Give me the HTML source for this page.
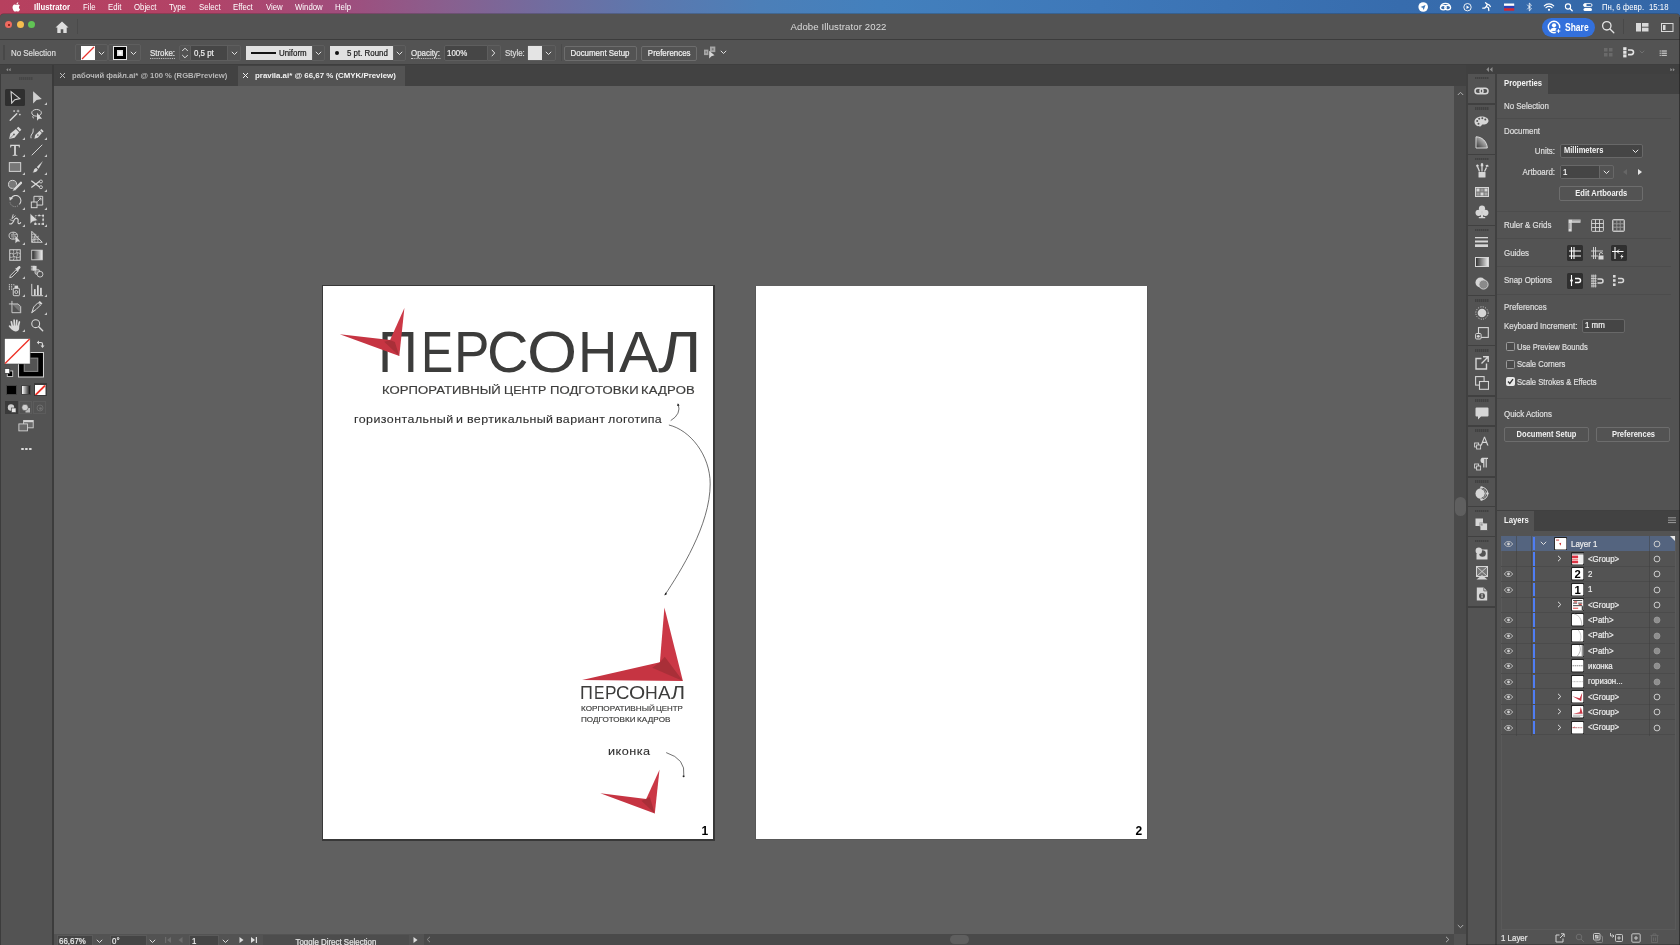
<!DOCTYPE html>
<html lang="ru"><head><meta charset="utf-8"><title>Adobe Illustrator 2022</title>
<style>
*{box-sizing:border-box;margin:0;padding:0}
html,body{width:1680px;height:945px;overflow:hidden;background:#535353}
body{will-change:transform;font-family:"Liberation Sans",sans-serif;font-size:9px;color:#e2e2e2;position:relative}
.abs,.abs *{position:absolute}
#menubar{position:absolute;left:0;top:0;width:1680px;height:20px;background:linear-gradient(90deg,#b7405e 0,#b24367 200px,#a04d7c 340px,#88608f 450px,#706da0 550px,#5c78ae 650px,#4c7fb8 760px,#4380bd 880px,#3e78b9 1100px,#376cad 1400px,#3467a7 1680px)}
#menubar span{position:absolute;top:2px;font-size:8.400px;color:#fff;white-space:nowrap;line-height:10px;transform:scaleX(.93);transform-origin:0 0}
#titlebar{position:absolute;left:0;top:14.300px;width:1680px;height:25.700px;background:#535353;border-bottom:1.300px solid #3c3c3c;border-radius:3.500px 3.500px 0 0;box-shadow:0 -.5px 0 rgba(40,40,40,.55)}
#ctrlbar{position:absolute;left:0;top:40px;width:1680px;height:25px;background:#535353;border-bottom:1.500px solid #3e3e3e}
#tabbar{position:absolute;left:0;top:65px;width:1680px;height:21px;background:#424242}
#toolbar{position:absolute;left:0;top:74px;width:52px;height:871px;background:#535353}
#canvas{position:absolute;left:54px;top:86px;width:1400px;height:848px;background:#606060;overflow:hidden}
#vscroll{position:absolute;left:1454px;top:86px;width:12px;height:848px;background:#4a4a4a}
#statusbar{position:absolute;left:54px;top:934px;width:1412px;height:11px;background:#4a4a4a}
#dock{position:absolute;left:1466px;top:65px;width:214px;height:880px;background:#404040}
.chk{position:absolute;width:9px;height:9px;border:1px solid #9a9a9a;border-radius:1.5px;background:#4a4a4a}
.lbl{position:absolute;white-space:nowrap;line-height:1;font-size:8.600px;color:#dedede;transform:scaleX(.92);transform-origin:0 50%;margin-top:-.4px}
.btn{position:absolute;border:1px solid #6d6d6d;border-radius:2px;text-align:center;font-size:7.500px;font-weight:bold;color:#f2f2f2;white-space:nowrap}
.sep{position:absolute;height:1px;background:#4c4c4c;width:174px}
.t{position:absolute;white-space:nowrap;line-height:1}
#ctrlbar .t,#statusbar .t,.lbl{-webkit-text-stroke:.22px currentColor}
.lbl[style*="bold"]{-webkit-text-stroke:0}
</style></head><body>
<div id="menubar">
<svg class="t" style="left:11px;top:1px" width="10" height="12" viewBox="0 0 10 12"><path fill="#fff" d="M7.9 6.3c0-1.2 1-1.8 1-1.8-.6-.8-1.400-.9-1.700-.9-.7-.1-1.400.4-1.800.4-.4 0-.9-.4-1.500-.4C3.100 3.600 2.300 4.100 1.900 4.800c-.8 1.400-.2 3.500.6 4.600.4.600.9 1.200 1.500 1.200.6 0 .8-.4 1.500-.4s.9.400 1.500.400c.600 0 1-.600 1.400-1.100.4-.600.600-1.200.600-1.300 0 0-1.100-.4-1.100-1.900zM6.800 2.800c.3-.4.500-.9.500-1.500-.5 0-1 .3-1.400.7-.3.400-.6.900-.5 1.400.5.100 1.100-.2 1.400-.6z"/></svg>
<span style="left:33.7px;font-weight:bold">Illustrator</span>
<span style="left:82.7px">File</span>
<span style="left:107.7px">Edit</span>
<span style="left:133.7px">Object</span>
<span style="left:168.7px">Type</span>
<span style="left:198.7px">Select</span>
<span style="left:232.7px">Effect</span>
<span style="left:265.7px">View</span>
<span style="left:294.7px">Window</span>
<span style="left:334.7px">Help</span>
<svg class="t" style="left:1415px;top:0" width="180" height="14" viewBox="0 0 180 14" fill="none" stroke="#fff" stroke-width="1">
<circle cx="8.200" cy="7" r="4.800" fill="#fff" stroke="none"/><path d="M5.500 7.100l5-2.200-1.800 5-1-2.100z" fill="#3f79b9" stroke="none"/>
<g stroke-width="1.300"><ellipse cx="28.300" cy="7.600" rx="2.900" ry="2.300"/><ellipse cx="32.700" cy="7.600" rx="2.900" ry="2.300"/><path d="M25.600 7c.5-2.300 2.600-3.600 4.900-3.600 2.200 0 3.900 1 4.600 2.600"/></g>
<circle cx="52.500" cy="7.200" r="3.700" stroke-width=".9"/><path d="M51.500 5.500l2.800 1.700-2.800 1.700z" fill="#fff" stroke="none"/>
<path d="M70.500 2.800l1.800 1.400-1 2.300 2.200 1.200.3 2.800M71.300 6.500l-1.500 1.500-2 .2M72.300 4.200l2 .8 1 1.500" stroke-width="1.300" stroke-linecap="round" stroke-linejoin="round"/>
<rect x="89" y="3.500" width="10.200" height="2.400" fill="#fff" stroke="none"/><rect x="89" y="5.900" width="10.200" height="2.400" fill="#2a3fb5" stroke="none"/><rect x="89" y="8.300" width="10.200" height="2.400" fill="#d8242f" stroke="none"/>
<path d="M112.200 4.700l4.200 4.200-2.100 2V3.100l2.100 2-4.200 4.200" stroke-width=".8" stroke-linejoin="round"/>
<path d="M129.300 5.800a6.500 6.500 0 0 1 9.400 0M131 7.700a4.100 4.100 0 0 1 6 0" stroke-width="1.200" stroke-linecap="round"/><circle cx="134" cy="9.800" r="1.100" fill="#fff" stroke="none"/>
<circle cx="153" cy="6.500" r="2.600" stroke-width="1.100"/><path d="M155 8.500l2.200 2.300" stroke-width="1.300" stroke-linecap="round"/>
<rect x="168.500" y="3.600" width="8.500" height="3" rx="1.500" stroke-width=".9"/><rect x="168.500" y="8" width="8.500" height="3" rx="1.500" fill="#fff" stroke="none"/><circle cx="170.200" cy="5.100" r="1.500" fill="#fff" stroke="none"/>
</svg>
<span style="left:1601.500px">Пн, 6 февр.</span>
<span style="left:1649px">15:18</span>
</div>
<div id="titlebar">
<div class="t" style="left:5.100px;top:7.100px;width:7px;height:7px;border-radius:50%;background:#ee6a5f"></div><div class="t" style="left:7.500px;top:9.500px;width:2.200px;height:2.200px;border-radius:50%;background:#7a1208"></div>
<div class="t" style="left:17px;top:7.100px;width:7px;height:7px;border-radius:50%;background:#f5bd4f"></div>
<div class="t" style="left:28.400px;top:7.100px;width:7px;height:7px;border-radius:50%;background:#61c455"></div>
<svg class="t" style="left:55px;top:7px" width="14" height="13" viewBox="0 0 14 13"><path fill="#dedede" d="M7 .5L.5 6.500h1.800V12h3.400V8.200h2.600V12h3.400V6.500h1.800z"/></svg>
<div class="t" style="left:77px;top:5px;width:1px;height:15px;background:#4a4a4a"></div>
<div class="t" style="left:-1.500px;top:8px;width:1680px;text-align:center;font-size:9.600px;color:#dcdcdc;letter-spacing:.1px">Adobe Illustrator 2022</div>
<div class="t" style="left:1542px;top:4px;width:53px;height:19px;border-radius:9.500px;background:#3370dc"></div>
<svg class="t" style="left:1547px;top:6px" width="16" height="15" viewBox="0 0 16 15" fill="none" stroke="#fff"><circle cx="7" cy="7" r="5.700" stroke-width="1.400"/><circle cx="7" cy="5.300" r="2.100" fill="#fff" stroke="none"/><path d="M3 11c.5-2.500 2-3.300 4-3.300s3.500.8 4 3.300z" fill="#fff" stroke="none"/><circle cx="11.500" cy="11" r="3" fill="#3370dc" stroke="none"/><path d="M11.500 9.200v3.600M9.700 11h3.600" stroke-width="1"/></svg>
<div class="t" style="left:1565.300px;top:9px;font-size:10px;color:#fff;font-weight:bold;transform:scaleX(.85);transform-origin:0 0">Share</div>
<svg class="t" style="left:1601px;top:6px" width="14" height="14" viewBox="0 0 14 14" fill="none" stroke="#e4e4e4" stroke-width="1.300"><circle cx="5.800" cy="5.800" r="4.200"/><path d="M9 9l3.800 3.800" stroke-linecap="round"/></svg>
<div class="t" style="left:1623px;top:5px;width:1px;height:15px;background:#484848"></div>
<svg class="t" style="left:1636px;top:9px" width="13" height="9" viewBox="0 0 13 9" fill="#d9d9d9"><rect x="0" y="0" width="5" height="8.500"/><rect x="6" y="0" width="6.500" height="3.700"/><rect x="6" y="4.700" width="6.500" height="3.800"/></svg>
<svg class="t" style="left:1661px;top:9px" width="13" height="9" viewBox="0 0 13 9" fill="none" stroke="#d9d9d9"><rect x=".5" y=".5" width="11.500" height="8" /><rect x="2" y="2" width="2.500" height="5" fill="#d9d9d9" stroke="none"/></svg>
</div>
<div id="ctrlbar">
<div class="t" style="left:3px;top:5px;width:2px;height:15px;background:#484848"></div>
<div class="t" style="left:11px;top:9px;font-size:8.600px;transform:scaleX(.92);transform-origin:0 50%;margin-top:-.4px;color:#dcdcdc">No Selection</div>
<div class="t" style="left:75px;top:4px;width:33px;height:17px;border:1px solid #5e5e5e;border-radius:2px"></div>
<svg class="t" style="left:81px;top:6px" width="14" height="14" viewBox="0 0 14 14"><rect width="14" height="14" fill="#fff"/><path d="M1 13L13 1" stroke="#e8322c" stroke-width="1.200"/></svg>
<svg class="t" style="left:98px;top:11px" width="7" height="5" viewBox="0 0 7 5" fill="none" stroke="#e0e0e0" stroke-width="1"><path d="M.8.800l2.700 2.700L6.200.8"/></svg>
<div class="t" style="left:108px;top:4px;width:33px;height:17px;border:1px solid #5e5e5e;border-radius:2px"></div>
<svg class="t" style="left:113px;top:6px" width="14" height="14" viewBox="0 0 14 14"><rect x=".5" y=".5" width="13" height="13" fill="#000" stroke="#e6e6e6"/><rect x="4" y="4" width="6" height="6" fill="#ddd"/><rect x="5.500" y="5.500" width="3" height="3" fill="#fff"/></svg>
<svg class="t" style="left:130px;top:11px" width="7" height="5" viewBox="0 0 7 5" fill="none" stroke="#e0e0e0" stroke-width="1"><path d="M.8.800l2.700 2.700L6.200.8"/></svg>
<div class="t" style="left:150px;top:9px;font-size:8.600px;transform:scaleX(.92);transform-origin:0 50%;margin-top:-.4px;color:#e6e6e6;border-bottom:1px dotted #cfcfcf;padding-bottom:1px">Stroke:</div>
<div class="t" style="left:179px;top:5px;width:12px;height:16px;border:1px solid #5e5e5e;border-radius:2px 0 0 2px"></div>
<svg class="t" style="left:181px;top:7px" width="8" height="12" viewBox="0 0 8 12" fill="none" stroke="#e0e0e0" stroke-width="1"><path d="M1.200 4l2.800-2.800L6.800 4M1.200 8l2.800 2.800L6.800 8"/></svg>
<div class="t" style="left:191px;top:5px;width:37px;height:16px;background:#464646;border:1px solid #5e5e5e;border-left:0"></div>
<div class="t" style="left:194px;top:9px;font-size:8.600px;transform:scaleX(.92);transform-origin:0 50%;margin-top:-.4px;color:#ededed">0,5 pt</div>
<div class="t" style="left:228px;top:5px;width:13px;height:16px;border:1px solid #5e5e5e;border-left:0;border-radius:0 2px 2px 0"></div>
<svg class="t" style="left:231px;top:11px" width="7" height="5" viewBox="0 0 7 5" fill="none" stroke="#e0e0e0" stroke-width="1"><path d="M.8.800l2.700 2.700L6.200.8"/></svg>
<div class="t" style="left:246px;top:6px;width:66px;height:14px;background:#e1e1e1"></div>
<div class="t" style="left:251px;top:12px;width:25px;height:2px;background:#151515"></div>
<div class="t" style="left:279px;top:9.200px;font-size:8.600px;transform:scaleX(.92);transform-origin:0 50%;margin-top:-.4px;color:#1c1c1c">Uniform</div>
<div class="t" style="left:312px;top:5px;width:13px;height:16px;border:1px solid #5e5e5e;border-radius:0 2px 2px 0"></div>
<svg class="t" style="left:315px;top:11px" width="7" height="5" viewBox="0 0 7 5" fill="none" stroke="#e0e0e0" stroke-width="1"><path d="M.8.800l2.700 2.700L6.200.8"/></svg>
<div class="t" style="left:330px;top:6px;width:63px;height:14px;background:#e1e1e1"></div>
<div class="t" style="left:334.500px;top:10.500px;width:4.500px;height:4.500px;border-radius:50%;background:#111"></div>
<div class="t" style="left:347px;top:9.200px;font-size:8.600px;transform:scaleX(.92);transform-origin:0 50%;margin-top:-.4px;color:#1c1c1c">5 pt. Round</div>
<div class="t" style="left:393px;top:5px;width:13px;height:16px;border:1px solid #5e5e5e;border-radius:0 2px 2px 0"></div>
<svg class="t" style="left:396px;top:11px" width="7" height="5" viewBox="0 0 7 5" fill="none" stroke="#e0e0e0" stroke-width="1"><path d="M.8.800l2.700 2.700L6.200.8"/></svg>
<div class="t" style="left:411px;top:9px;font-size:8.600px;transform:scaleX(.92);transform-origin:0 50%;margin-top:-.4px;color:#e6e6e6;border-bottom:1px dotted #cfcfcf;padding-bottom:1px">Opacity:</div>
<div class="t" style="left:444px;top:5px;width:44px;height:16px;background:#464646;border:1px solid #5e5e5e;border-radius:2px 0 0 2px"></div>
<div class="t" style="left:447px;top:9.200px;font-size:8.600px;transform:scaleX(.92);transform-origin:0 50%;margin-top:-.4px;color:#ededed">100%</div>
<div class="t" style="left:488px;top:5px;width:13px;height:16px;border:1px solid #5e5e5e;border-left:0;border-radius:0 2px 2px 0"></div>
<svg class="t" style="left:491px;top:9px" width="5" height="8" viewBox="0 0 5 8" fill="none" stroke="#e0e0e0" stroke-width="1"><path d="M.8.800l2.900 3.200L.8 7.200"/></svg>
<div class="t" style="left:505px;top:9.200px;font-size:8.600px;transform:scaleX(.92);transform-origin:0 50%;margin-top:-.4px;color:#dcdcdc">Style:</div>
<div class="t" style="left:527px;top:5px;width:29px;height:16px;border:1px solid #5e5e5e;border-radius:2px"></div>
<div class="t" style="left:528px;top:6px;width:14px;height:14px;background:#e4e4e4"></div>
<svg class="t" style="left:545px;top:11px" width="7" height="5" viewBox="0 0 7 5" fill="none" stroke="#e0e0e0" stroke-width="1"><path d="M.8.800l2.700 2.700L6.200.8"/></svg>
<div class="t" style="left:561px;top:4px;width:1px;height:17px;background:#4b4b4b"></div>
<div class="t" style="left:564px;top:5.500px;width:73px;height:15px;border:1px solid #6d6d6d;border-radius:2px;text-align:center;font-size:8px;line-height:13px;color:#f0f0f0"><span style="display:inline-block;font-size:8.600px;transform:scaleX(.92)">Document Setup</span></div>
<div class="t" style="left:641px;top:5.500px;width:56px;height:15px;border:1px solid #6d6d6d;border-radius:2px;text-align:center;font-size:8px;line-height:13px;color:#f0f0f0"><span style="display:inline-block;font-size:8.600px;transform:scaleX(.92)">Preferences</span></div>
<svg class="t" style="left:703px;top:5px" width="14" height="14" viewBox="0 0 14 14"><rect x="1" y="4.600" width="4.400" height="5.500" fill="#a6a6a6"/><rect x="2.400" y="6.300" width="1.600" height="2" fill="#7c7c7c"/><rect x="7" y="1.500" width="5.300" height="5.600" fill="#a6a6a6"/><rect x="8.800" y="3.300" width="1.800" height="2" fill="#787878"/><path d="M6.200 5.800v7.600l2.200-2.200 3.100-1z" fill="#d6d6d6"/></svg>
<svg class="t" style="left:720px;top:10px" width="7" height="5" viewBox="0 0 7 5" fill="none" stroke="#e0e0e0" stroke-width="1"><path d="M.8.800l2.700 2.700L6.200.8"/></svg>
<svg class="t" style="left:1604px;top:8px" width="9" height="9" viewBox="0 0 9 9" fill="#6a6a6a"><rect x="0" y="0" width="3.500" height="3.500"/><rect x="5" y="0" width="3.500" height="3.500"/><rect x="0" y="5" width="3.500" height="3.500"/><rect x="5" y="5" width="3.500" height="3.500"/></svg>
<svg class="t" style="left:1623px;top:7px" width="12" height="11" viewBox="0 0 12 11" fill="none" stroke="#e4e4e4"><rect x=".2" y=".2" width="3.300" height="3" fill="#e4e4e4" stroke="none"/><rect x=".2" y="3.800" width="3.300" height="3" fill="#e4e4e4" stroke="none"/><rect x=".2" y="7.400" width="3.300" height="3" fill="#e4e4e4" stroke="none"/><path d="M5 3h3.200a2.300 2.300 0 0 1 0 4.600H5" stroke-width="1.600"/></svg>
<svg class="t" style="left:1638.700px;top:10px" width="6" height="4.300" viewBox="0 0 7 5" fill="none" stroke="#747474" stroke-width="1"><path d="M.8.800l2.700 2.700L6.200.8"/></svg>
<svg class="t" style="left:1658.800px;top:9.500px" width="8.500" height="6.500" viewBox="0 0 10 9" fill="#c4c4c4"><rect x="0" y=".5" width="1.600" height="1.800"/><rect x="2.600" y=".5" width="7.400" height="1.800"/><rect x="0" y="3.600" width="1.600" height="1.800"/><rect x="2.600" y="3.600" width="7.400" height="1.800"/><rect x="0" y="6.700" width="1.600" height="1.800"/><rect x="2.600" y="6.700" width="7.400" height="1.800"/></svg>
</div>
<div id="tabbar">
<div class="t" style="left:0;top:0;width:52px;height:9px;background:#424242"></div>
<svg class="t" style="left:5.500px;top:2.500px" width="5" height="3.600" viewBox="0 0 7 5" fill="#8c8c8c"><path d="M3 0v5L.3 2.500zM6.500 0v5L3.800 2.500z"/></svg>
<div class="t" style="left:52px;top:0;width:2px;height:21px;background:#3a3a3a"></div>
<svg class="t" style="left:59px;top:7px" width="7" height="7" viewBox="0 0 7 7" stroke="#bdbdbd" stroke-width="1"><path d="M1 1l5 5M6 1L1 6"/></svg>
<div class="t" style="left:72px;top:6.500px;font-size:8px;color:#b9b9b9;font-weight:bold;transform:scaleX(.96);transform-origin:0 0">рабочий файл.ai* @ 100 % (RGB/Preview)</div>
<div class="t" style="left:238px;top:1px;width:167px;height:20px;background:#535353"></div>
<svg class="t" style="left:242px;top:7px" width="7" height="7" viewBox="0 0 7 7" stroke="#f0f0f0" stroke-width="1"><path d="M1 1l5 5M6 1L1 6"/></svg>
<div class="t" style="left:255px;top:6.500px;font-size:8px;color:#f4f4f4;font-weight:bold;transform:scaleX(.985);transform-origin:0 0">pravila.ai* @ 66,67 % (CMYK/Preview)</div>
</div>
<div id="toolbar">
<div class="t" style="left:19px;top:3px;width:14px;height:3px;background:repeating-linear-gradient(90deg,#464646 0,#464646 1px,#4c4c4c 1px,#4c4c4c 2px)"></div>
<div class="t" style="left:5px;top:15px;width:20px;height:16.500px;background:#2f2f2f;border-radius:1.500px"></div>
<svg class="t" style="left:8.2px;top:16.3px" width="14" height="14" viewBox="0 0 16 16"><path d="M3.54 1.83 L13.49 9.83 L7.77 11.09 L4.23 14.97z" fill="none" stroke="#d4d4d4" stroke-width="1.250" stroke-linejoin="miter"/></svg>
<svg class="t" style="left:30.2px;top:16.3px" width="14" height="14" viewBox="0 0 16 16"><path d="M3.54 1.37 L3.54 15.31 L7.54 11.54 L13.49 10.40z" fill="#cfcfcf"/></svg>
<svg class="t" style="left:43.5px;top:27.8px" width="3" height="3" viewBox="0 0 3 3"><path d="M3 .3v2.700H.3z" fill="#c6c6c6"/></svg>
<svg class="t" style="left:8.2px;top:33.9px" width="14" height="14" viewBox="0 0 16 16"><path d="M2.500 14L10 6.500" stroke="#d8d8d8" stroke-width="1.600" stroke-linecap="round"/><path d="M11.500 2v3M10 3.500h3M13.500 6.500v2M12.500 7.500h2M7 2.500v2M6 3.500h2" stroke="#d8d8d8" stroke-width=".9"/></svg>
<svg class="t" style="left:30.2px;top:33.9px" width="14" height="14" viewBox="0 0 16 16"><ellipse cx="7.500" cy="5.500" rx="5.500" ry="3.800" fill="none" stroke="#d8d8d8" stroke-width="1.100"/><path d="M4 8.500c-1.500 1-1 3 .5 3" fill="none" stroke="#d8d8d8" stroke-width="1"/><path d="M8 5.500v9l2.200-2.200h3.600z" fill="#d8d8d8"/></svg>
<svg class="t" style="left:8.2px;top:51.6px" width="14" height="14" viewBox="0 0 16 16"><path d="M1.300 14.800l1.400-6.300L9 3.400l3.700 3.700-5.200 6.200z" fill="#d8d8d8"/><path d="M9.900 2.700l1.900-1.900 3.500 3.500-1.900 1.900z" fill="#d8d8d8"/><circle cx="6.800" cy="9.700" r="1" fill="#535353"/><path d="M2.300 14.200l4-4" stroke="#535353" stroke-width=".7"/></svg>
<svg class="t" style="left:21.5px;top:63.1px" width="3" height="3" viewBox="0 0 3 3"><path d="M3 .3v2.700H.3z" fill="#c6c6c6"/></svg>
<svg class="t" style="left:30.2px;top:51.6px" width="14" height="14" viewBox="0 0 16 16"><path d="M5 14.500l1-4.300L11 5.500l2.600 2.600-4.700 5.300z" fill="#d8d8d8"/><path d="M11.600 4.800l1.400-1.400 2.600 2.600-1.400 1.400z" fill="#d8d8d8"/><circle cx="9" cy="10.400" r=".9" fill="#535353"/><path d="M1.200 14c-.8-3 .8-4.500 1.800-6s.3-3.500.8-5" fill="none" stroke="#d8d8d8" stroke-width="1.100"/></svg>
<svg class="t" style="left:43.5px;top:63.1px" width="3" height="3" viewBox="0 0 3 3"><path d="M3 .3v2.700H.3z" fill="#c6c6c6"/></svg>
<svg class="t" style="left:8.2px;top:68.9px" width="14" height="14" viewBox="0 0 16 16"><path d="M2.500 2h11v3h-1l-.4-1.700H9v10l1.700.4v.8H5.300v-.8L7 13.300v-10H3.900L3.500 5h-1z" fill="#d8d8d8"/></svg>
<svg class="t" style="left:21.5px;top:80.4px" width="3" height="3" viewBox="0 0 3 3"><path d="M3 .3v2.700H.3z" fill="#c6c6c6"/></svg>
<svg class="t" style="left:30.2px;top:68.9px" width="14" height="14" viewBox="0 0 16 16"><path d="M2 14L14 2" stroke="#d8d8d8" stroke-width="1.100"/></svg>
<svg class="t" style="left:43.5px;top:80.4px" width="3" height="3" viewBox="0 0 3 3"><path d="M3 .3v2.700H.3z" fill="#c6c6c6"/></svg>
<svg class="t" style="left:8.2px;top:86.0px" width="14" height="14" viewBox="0 0 16 16"><rect x="1.500" y="3" width="13" height="10" fill="#777" stroke="#d8d8d8" stroke-width="1.100"/></svg>
<svg class="t" style="left:21.5px;top:97.5px" width="3" height="3" viewBox="0 0 3 3"><path d="M3 .3v2.700H.3z" fill="#c6c6c6"/></svg>
<svg class="t" style="left:30.2px;top:86.0px" width="14" height="14" viewBox="0 0 16 16"><path d="M14.800 1L7.800 8l2 2z" fill="#d8d8d8"/><path d="M7.300 9.200l1.600 1.600c-.5 2-2.500 3.500-6 3.500 1.800-1.200 1.200-2.800 2.200-4 .7-.8 1.500-1.100 2.200-1.100z" fill="#d8d8d8"/></svg>
<svg class="t" style="left:43.5px;top:97.5px" width="3" height="3" viewBox="0 0 3 3"><path d="M3 .3v2.700H.3z" fill="#c6c6c6"/></svg>
<svg class="t" style="left:8.2px;top:103.6px" width="14" height="14" viewBox="0 0 16 16"><circle cx="5.2" cy="7.3" r="4.6" fill="#777" stroke="#d8d8d8" stroke-width="1.1"/><path d="M5.2 15.2l.9-3.2L14.8 3.3l2.3 2.3L8.4 14.3z" fill="#d8d8d8" stroke="#535353" stroke-width=".7"/></svg>
<svg class="t" style="left:21.5px;top:115.1px" width="3" height="3" viewBox="0 0 3 3"><path d="M3 .3v2.700H.3z" fill="#c6c6c6"/></svg>
<svg class="t" style="left:30.2px;top:103.6px" width="14" height="14" viewBox="0 0 16 16"><path d="M1.5 3.200l9.500 7.200M1.500 10.800l9.500-7.200" stroke="#d8d8d8" stroke-width="1.500"/><circle cx="12.500" cy="4" r="1.700" fill="none" stroke="#d8d8d8" stroke-width="1"/><circle cx="12.500" cy="10.500" r="1.700" fill="none" stroke="#d8d8d8" stroke-width="1"/></svg>
<svg class="t" style="left:43.5px;top:115.1px" width="3" height="3" viewBox="0 0 3 3"><path d="M3 .3v2.700H.3z" fill="#c6c6c6"/></svg>
<svg class="t" style="left:8.2px;top:121.3px" width="14" height="14" viewBox="0 0 16 16"><path d="M3.6 3.7A5.9 5.9 0 1 1 13.2 10.4" fill="none" stroke="#d8d8d8" stroke-width="1.2"/><path d="M13.2 10.4A5.9 5.9 0 0 1 2.3 8.5" fill="none" stroke="#a8a8a8" stroke-width="1" stroke-dasharray="1.3 1.3"/><path d="M1.3 2.4l4.8.6-3.9 3.6z" fill="#d8d8d8"/></svg>
<svg class="t" style="left:21.5px;top:132.8px" width="3" height="3" viewBox="0 0 3 3"><path d="M3 .3v2.700H.3z" fill="#c6c6c6"/></svg>
<svg class="t" style="left:30.2px;top:121.3px" width="14" height="14" viewBox="0 0 16 16"><rect x="1.500" y="8" width="6.500" height="6.500" fill="none" stroke="#d8d8d8" stroke-width="1.100"/><path d="M4.500 8V1.500h10V11.500H8" fill="none" stroke="#d8d8d8" stroke-width="1.100"/><path d="M8.500 7.500l4-4M9.800 3.500h2.700v2.700" fill="none" stroke="#d8d8d8" stroke-width="1"/></svg>
<svg class="t" style="left:43.5px;top:132.8px" width="3" height="3" viewBox="0 0 3 3"><path d="M3 .3v2.700H.3z" fill="#c6c6c6"/></svg>
<svg class="t" style="left:8.2px;top:138.6px" width="14" height="14" viewBox="0 0 16 16"><path d="M1.500 12c2 1.500 4-.5 5-3s2.500-4 4.500-2.500-1 4.500 1 5.500 2.500-1.500 2.500-1.500" fill="none" stroke="#d8d8d8" stroke-width="1.300"/><path d="M6 1.500l-1.500 5M8.500 3l-4 3.500" stroke="#d8d8d8" stroke-width="1"/><path d="M2 7.500l5 2" stroke="#d8d8d8" stroke-width=".8"/></svg>
<svg class="t" style="left:21.5px;top:150.1px" width="3" height="3" viewBox="0 0 3 3"><path d="M3 .3v2.700H.3z" fill="#c6c6c6"/></svg>
<svg class="t" style="left:30.2px;top:138.6px" width="14" height="14" viewBox="0 0 16 16"><rect x="6" y="3" width="9" height="9.6" fill="none" stroke="#d8d8d8" stroke-width=".9" stroke-dasharray="1.6 1.2"/><g fill="#d8d8d8"><rect x="13.9" y="1.9" width="2.2" height="2.2"/><rect x="13.9" y="11.5" width="2.2" height="2.2"/><rect x="4.9" y="11.5" width="2.2" height="2.2"/><rect x="9.6" y="1.9" width="1.8" height="1.8"/><rect x="9.6" y="11.7" width="1.8" height="1.8"/><rect x="14.1" y="6.8" width="1.8" height="1.8"/></g><path d="M.2.6v11.800l3-2.700 5.500-1.500z" fill="#d8d8d8" stroke="#535353" stroke-width=".5"/></svg>
<svg class="t" style="left:43.5px;top:150.1px" width="3" height="3" viewBox="0 0 3 3"><path d="M3 .3v2.700H.3z" fill="#c6c6c6"/></svg>
<svg class="t" style="left:8.2px;top:156.3px" width="14" height="14" viewBox="0 0 16 16"><ellipse cx="6" cy="6.500" rx="4.800" ry="4" fill="none" stroke="#d8d8d8" stroke-width="1"/><path d="M6 2.500v8M3.500 5h7" stroke="#d8d8d8" stroke-width=".8" fill="none"/><rect x="3.500" y="5" width="5" height="3.500" fill="#8a8a8a"/><path d="M8.500 6.500v8.500l2-2h3.500z" fill="#d8d8d8"/></svg>
<svg class="t" style="left:21.5px;top:167.8px" width="3" height="3" viewBox="0 0 3 3"><path d="M3 .3v2.700H.3z" fill="#c6c6c6"/></svg>
<svg class="t" style="left:30.2px;top:156.3px" width="14" height="14" viewBox="0 0 16 16"><path d="M2 1.500V14h12z" fill="none" stroke="#d8d8d8" stroke-width="1.100"/><path d="M2 14l5-9.500M2 14l8-7.200M2 11h9.500M2 8h6M2 5h3M5.500 4v10M9 7v7" stroke="#d8d8d8" stroke-width=".7" fill="none"/></svg>
<svg class="t" style="left:43.5px;top:167.8px" width="3" height="3" viewBox="0 0 3 3"><path d="M3 .3v2.700H.3z" fill="#c6c6c6"/></svg>
<svg class="t" style="left:8.2px;top:173.5px" width="14" height="14" viewBox="0 0 16 16"><rect x="2" y="2" width="12" height="12" fill="none" stroke="#d8d8d8" stroke-width="1.100"/><path d="M2 6.500c3-1.500 4 1.500 6 0s3-1.500 6 0M2 10.500c3 1 4-1.500 6-.5s3 1.500 6 0M6 2c1.500 3-1 4 0 6s1.500 3 0 6M10.500 2c-1.500 3 1 4.500 0 6.500s-1 3 0 5.500" fill="none" stroke="#d8d8d8" stroke-width=".8"/></svg>
<svg class="t" style="left:30.2px;top:173.5px" width="14" height="14" viewBox="0 0 16 16"><defs><linearGradient id="gr1"><stop offset="0" stop-color="#222"/><stop offset="1" stop-color="#f2f2f2"/></linearGradient></defs><rect x="2" y="2.500" width="12" height="11" fill="url(#gr1)" stroke="#d8d8d8" stroke-width="1"/></svg>
<svg class="t" style="left:8.2px;top:190.8px" width="14" height="14" viewBox="0 0 16 16"><path d="M2 14.500l.7-2.500 6.500-6.500 1.800 1.800L4.500 13.800z" fill="none" stroke="#d8d8d8" stroke-width="1"/><path d="M8.500 4.500l3 3 .9-.9-.7-.7 2-2c.8-.8.800-1.700.2-2.300s-1.500-.6-2.300.2l-2 2-.7-.7z" fill="#d8d8d8"/></svg>
<svg class="t" style="left:21.5px;top:202.3px" width="3" height="3" viewBox="0 0 3 3"><path d="M3 .3v2.700H.3z" fill="#c6c6c6"/></svg>
<svg class="t" style="left:30.2px;top:190.8px" width="14" height="14" viewBox="0 0 16 16"><path d="M1 1.500h4.500M1 3.500h4.500M1 5.500h3" stroke="#d8d8d8" stroke-width="1"/><rect x="3" y="1" width="4.500" height="5.500" fill="#d8d8d8"/><circle cx="8.500" cy="8" r="3" fill="#8a8a8a" stroke="#d8d8d8" stroke-width=".8"/><circle cx="11.500" cy="10.500" r="3.300" fill="#535353" stroke="#d8d8d8" stroke-width="1"/></svg>

<svg class="t" style="left:8.2px;top:208.5px" width="14" height="14" viewBox="0 0 16 16"><rect x="6" y="6" width="7" height="8.500" rx="1" fill="none" stroke="#d8d8d8" stroke-width="1.100"/><rect x="7.500" y="3" width="4" height="3" fill="#d8d8d8"/><circle cx="9.500" cy="10.300" r="1.700" fill="none" stroke="#d8d8d8" stroke-width="1"/><path d="M1 2h1.300M3.500 2h1.300M1 4.500h1.300M3.500 4.500h1.300M1 7h1.300M3.500 7h1.300M6 2h1.300" stroke="#d8d8d8" stroke-width="1.300"/></svg>
<svg class="t" style="left:21.5px;top:220.0px" width="3" height="3" viewBox="0 0 3 3"><path d="M3 .3v2.700H.3z" fill="#c6c6c6"/></svg>
<svg class="t" style="left:30.2px;top:208.5px" width="14" height="14" viewBox="0 0 16 16"><path d="M2 1v13.500h13" fill="none" stroke="#d8d8d8" stroke-width="1.100"/><rect x="4.500" y="7" width="2" height="7" fill="#d8d8d8"/><rect x="8" y="2.500" width="2" height="11.500" fill="#d8d8d8"/><rect x="11.500" y="5.500" width="2" height="8.500" fill="#d8d8d8"/></svg>
<svg class="t" style="left:43.5px;top:220.0px" width="3" height="3" viewBox="0 0 3 3"><path d="M3 .3v2.700H.3z" fill="#c6c6c6"/></svg>
<svg class="t" style="left:8.2px;top:226.0px" width="14" height="14" viewBox="0 0 16 16"><path d="M4.500 1v13.500h10.500M1 4.500h3.500" fill="none" stroke="#d8d8d8" stroke-width="1"/><path d="M4.500 4.500h7l3 3V14.500" fill="#777" stroke="#d8d8d8" stroke-width="1"/></svg>

<svg class="t" style="left:30.2px;top:226.0px" width="14" height="14" viewBox="0 0 16 16"><path d="M2 14.500l2.200-6.500 5-5 2.800 2.800-5 5z" fill="none" stroke="#d8d8d8" stroke-width="1.100"/><path d="M9.700 2.500l1.500-1.500 3 3-1.500 1.500z" fill="#d8d8d8"/><path d="M2 14.500l3-3" stroke="#d8d8d8" stroke-width=".9"/></svg>
<svg class="t" style="left:43.5px;top:237.5px" width="3" height="3" viewBox="0 0 3 3"><path d="M3 .3v2.700H.3z" fill="#c6c6c6"/></svg>
<svg class="t" style="left:8.2px;top:243.5px" width="14" height="14" viewBox="0 0 16 16"><g stroke="#d8d8d8" stroke-width="1.900" stroke-linecap="round" fill="none"><path d="M5 9.500L3.800 4.300M7.300 8.500L7 2.400M9.600 8.500l.5-5.800M11.800 9.200l1.200-4.700M4.800 12.500L1.800 9.300"/></g><path d="M3.800 8.500h9v2.500q0 4.300-4.400 4.300-3.300 0-4.600-3.800z" fill="#d8d8d8"/></svg>
<svg class="t" style="left:21.5px;top:255.0px" width="3" height="3" viewBox="0 0 3 3"><path d="M3 .3v2.700H.3z" fill="#c6c6c6"/></svg>
<svg class="t" style="left:30.2px;top:243.5px" width="14" height="14" viewBox="0 0 16 16"><circle cx="6.500" cy="6.500" r="4.500" fill="none" stroke="#d8d8d8" stroke-width="1.200"/><path d="M10 10l4.500 4.500" stroke="#d8d8d8" stroke-width="1.600" stroke-linecap="round"/></svg>
<svg class="t" style="left:17.700px;top:278px" width="26" height="25.500" viewBox="0 0 25 25" preserveAspectRatio="none"><rect x=".5" y=".5" width="24" height="24" fill="#000" stroke="#d0d0d0" stroke-width="1"/><rect x="6" y="6" width="13" height="13" fill="#535353" stroke="#8c8c8c" stroke-width="1"/></svg>
<svg class="t" style="left:4.200px;top:264.200px" width="26.700" height="26.500" viewBox="0 0 26 26" preserveAspectRatio="none"><rect x=".5" y=".5" width="25" height="25" fill="#fff" stroke="#4a4a4a" stroke-width=".6"/><path d="M1 25L25 1" stroke="#ee3026" stroke-width="1.300"/></svg>
<svg class="t" style="left:36px;top:266px" width="9" height="9" viewBox="0 0 9 9" fill="none" stroke="#d6d6d6" stroke-width="1.200"><path d="M1.500 2.500h3.500a1.500 1.500 0 0 1 1.500 1.500v3"/><path d="M3 .5L.8 2.500 3 4.500zM4.500 5.500l2 2.500 2-2.500z" fill="#d6d6d6" stroke="none"/></svg>
<svg class="t" style="left:4.200px;top:294.300px" width="9.500" height="9" viewBox="0 0 9 9"><rect x="3" y="3" width="5.500" height="5.500" fill="#000" stroke="#e0e0e0" stroke-width=".8"/><rect x=".5" y=".5" width="5" height="5" fill="#fff" stroke="#3a3a3a" stroke-width=".8"/></svg>
<div class="t" style="left:33.500px;top:309px;width:13px;height:13px;background:#3a3a3a"></div>
<div class="t" style="left:6px;top:310.500px;width:10.500px;height:10.500px;background:#000;border:.5px solid #444"></div>
<div class="t" style="left:20.500px;top:310.500px;width:10.500px;height:10.500px;background:linear-gradient(90deg,#fff,#111);border:.5px solid #444"></div>
<svg class="t" style="left:35px;top:310.500px" width="10.500" height="10.500" viewBox="0 0 10.500 10.500"><rect width="10.500" height="10.500" fill="#fff"/><path d="M.5 10L10 .5" stroke="#ee3026" stroke-width="1.800"/></svg>
<div class="t" style="left:5px;top:327px;width:12.500px;height:12.500px;background:#3a3a3a"></div>
<div class="t" style="left:19px;top:327px;width:12.500px;height:12.500px;border:1px solid #5c5c5c"></div>
<div class="t" style="left:33px;top:327px;width:12.500px;height:12.500px;border:1px solid #5c5c5c"></div>
<svg class="t" style="left:6.500px;top:328.500px" width="10" height="10" viewBox="0 0 10 10"><circle cx="4" cy="4.500" r="3.200" fill="#cfcfcf"/><rect x="4.500" y="5" width="4.500" height="4.500" fill="#e6e6e6" stroke="#3a3a3a" stroke-width=".6"/></svg>
<svg class="t" style="left:20.500px;top:328.500px" width="10" height="10" viewBox="0 0 10 10"><rect x="4.500" y="5" width="4.500" height="4.500" fill="#bdbdbd"/><circle cx="4" cy="4.500" r="3.200" fill="#cfcfcf" stroke="#535353" stroke-width=".6"/></svg>
<svg class="t" style="left:34.500px;top:328.500px" width="10" height="10" viewBox="0 0 10 10"><circle cx="5" cy="5" r="3" fill="none" stroke="#737373" stroke-width=".8"/><circle cx="5.500" cy="5.500" r="1.300" fill="#737373"/></svg>
<svg class="t" style="left:17.800px;top:345.800px" width="16.500" height="12.200" viewBox="0 0 19 14"><rect x="6.500" y=".5" width="11" height="8.500" fill="#6a6a6a" stroke="#d6d6d6" stroke-width="1"/><rect x="6.500" y=".5" width="11" height="2" fill="#d6d6d6"/><rect x="1" y="4.500" width="10" height="8" fill="#6a6a6a" stroke="#d6d6d6" stroke-width="1"/></svg>
<div class="t" style="left:21.200px;top:374px;width:2.400px;height:2.400px;border-radius:50%;background:#dcdcdc;box-shadow:3.900px 0 0 #dcdcdc,7.800px 0 0 #dcdcdc"></div>

</div><div class="t" style="left:52px;top:86px;width:2px;height:859px;background:#3c3c3c"></div><div class="t" style="left:0;top:74px;width:1px;height:871px;background:#3c3c3c"></div>
<div id="canvas">
<div class="t" style="left:267.500px;top:199px;width:393px;height:555.500px;background:#383838"></div>
<div class="t" style="left:268.800px;top:200.100px;width:390.400px;height:552.800px;background:#fff"></div>
<div class="t" style="left:701.200px;top:199.800px;width:392.400px;height:553.800px;background:#585858"></div>
<div class="t" style="left:701.700px;top:200.100px;width:391.400px;height:552.800px;background:#fff"></div>
<div class="t" style="left:0;top:237.96px;font-size:57.00px;color:#3c3c3b;"><span style="position:absolute;left:324.47px;top:0;transform:scaleX(0.971);transform-origin:0 0">П</span><span style="position:absolute;left:366.93px;top:0;transform:scaleX(0.848);transform-origin:0 0">Е</span><span style="position:absolute;left:400.24px;top:0;transform:scaleX(0.933);transform-origin:0 0">Р</span><span style="position:absolute;left:433.23px;top:0;transform:scaleX(1.008);transform-origin:0 0">С</span><span style="position:absolute;left:473.28px;top:0;transform:scaleX(1.130);transform-origin:0 0">О</span><span style="position:absolute;left:523.94px;top:0;transform:scaleX(0.956);transform-origin:0 0">Н</span><span style="position:absolute;left:565.00px;top:0;transform:scaleX(1.029);transform-origin:0 0">А</span><span style="position:absolute;left:604.34px;top:0;transform:scaleX(1.165);transform-origin:0 0">Л</span></div>
<div class="t" style="left:0;top:298.30px;font-size:11.70px;color:#3c3c3b;-webkit-text-stroke:.18px #3c3c3b"><span style="position:absolute;left:327.85px;top:0;letter-spacing:0.045px;transform:scaleX(1.120);transform-origin:0 0">КОРПОРАТИВНЫЙ</span> <span style="position:absolute;left:450.21px;top:0;letter-spacing:0.000px;transform:scaleX(1.061);transform-origin:0 0">ЦЕНТР</span> <span style="position:absolute;left:495.95px;top:0;letter-spacing:0.053px;transform:scaleX(1.120);transform-origin:0 0">ПОДГОТОВКИ</span> <span style="position:absolute;left:587.05px;top:0;letter-spacing:0.131px;transform:scaleX(1.120);transform-origin:0 0">КАДРОВ</span></div>
<div class="t" style="left:0;top:327.900px;font-size:11.10px;color:#2e2e2e;-webkit-text-stroke:.1px #2e2e2e"><span style="position:absolute;left:299.73px;top:0;letter-spacing:0.404px;transform:scaleX(1.120);transform-origin:0 0">горизонтальный</span> <span style="position:absolute;left:402.43px;top:0;letter-spacing:0.000px;transform:scaleX(1.120);transform-origin:0 0">и</span> <span style="position:absolute;left:412.83px;top:0;letter-spacing:0.352px;transform:scaleX(1.120);transform-origin:0 0">вертикальный</span> <span style="position:absolute;left:501.83px;top:0;letter-spacing:0.338px;transform:scaleX(1.120);transform-origin:0 0">вариант</span> <span style="position:absolute;left:554.18px;top:0;letter-spacing:0.288px;transform:scaleX(1.120);transform-origin:0 0">логотипа</span></div>
<div class="t" style="left:0;top:660.300px;font-size:11.30px;color:#2e2e2e;-webkit-text-stroke:.1px #2e2e2e"><span style="position:absolute;left:554.11px;top:0;letter-spacing:0.446px;transform:scaleX(1.120);transform-origin:0 0">иконка</span></div>
<div class="t" style="left:0;top:598.21px;font-size:18.00px;color:#3c3c3b;"><span style="position:absolute;left:526.37px;top:0;transform:scaleX(0.995);transform-origin:0 0">П</span><span style="position:absolute;left:540.11px;top:0;transform:scaleX(0.869);transform-origin:0 0">Е</span><span style="position:absolute;left:550.89px;top:0;transform:scaleX(0.957);transform-origin:0 0">Р</span><span style="position:absolute;left:561.57px;top:0;transform:scaleX(1.033);transform-origin:0 0">С</span><span style="position:absolute;left:574.53px;top:0;transform:scaleX(1.158);transform-origin:0 0">О</span><span style="position:absolute;left:590.93px;top:0;transform:scaleX(0.979);transform-origin:0 0">Н</span><span style="position:absolute;left:604.21px;top:0;transform:scaleX(1.054);transform-origin:0 0">А</span><span style="position:absolute;left:616.95px;top:0;transform:scaleX(1.194);transform-origin:0 0">Л</span></div>
<div class="t" style="left:0;top:618.96px;font-size:7.30px;color:#3c3c3b;-webkit-text-stroke:.15px #3c3c3b"><span style="position:absolute;left:527.15px;top:0;letter-spacing:0.005px;transform:scaleX(1.120);transform-origin:0 0">КОРПОРАТИВНЫЙ</span> <span style="position:absolute;left:602.47px;top:0;letter-spacing:-0.000px;transform:scaleX(1.081);transform-origin:0 0">ЦЕНТР</span></div>
<div class="t" style="left:0;top:629.66px;font-size:7.30px;color:#3c3c3b;-webkit-text-stroke:.15px #3c3c3b"><span style="position:absolute;left:527.15px;top:0;letter-spacing:0.000px;transform:scaleX(1.111);transform-origin:0 0">ПОДГОТОВКИ</span> <span style="position:absolute;left:583.25px;top:0;letter-spacing:0.080px;transform:scaleX(1.120);transform-origin:0 0">КАДРОВ</span></div>
<div class="t" style="left:647.48px;top:738.54px;font-size:12.00px;letter-spacing:0.000px;color:#000;font-weight:bold">1</div>
<div class="t" style="left:1081.54px;top:738.54px;font-size:12.00px;letter-spacing:0.000px;color:#000;font-weight:bold">2</div>
<svg class="t" style="left:0;top:0" width="1402" height="848" viewBox="0 0 1402 848">
<polygon points="285.8,248.3 336.1,253.9 345.3,270.0" fill="#c63442"/>
<polygon points="350.4,222.1 336.1,253.9 345.3,270.0" fill="#cb3846"/>
<polygon points="330.2,255.7 336.1,253.9 340.9,255.9 345.3,270.0" fill="#a92f38"/>
<polygon points="528.1,594.1 605.9,576.3 628.9,595.1" fill="#c63442"/>
<polygon points="610.4,521.5 605.9,576.3 628.9,595.1" fill="#cb3846"/>
<polygon points="598.2,581.8 605.9,576.3 610.8,570.7 628.9,595.1" fill="#a92f38"/>
<polygon points="546.3,707.3 592.2,713.0 600.8,727.6" fill="#c63442"/>
<polygon points="605.5,683.8 592.2,713.0 600.8,727.6" fill="#cb3846"/>
<polygon points="587.4,714.7 592.2,713.0 595.8,711.1 600.8,727.6" fill="#a92f38"/>
<g fill="none" stroke="#333" stroke-width=".7">
<path d="M614.9 339.0 C636.0 344.0 656.2 369.0 656.2 397.9 C656.2 439.0 626.0 486.0 610.9 509.0"/>
<path d="M616.7 334.6 Q627.5 328.0 624.2 318.2"/>
<path d="M612.2 666.6 Q632.0 673.0 629.8 689.5"/>
</g>
<g fill="#222">
<polygon points="610.5,509.6 611.3,506.6 613.2,507.9"/>
<polygon points="623.9,317.2 623.0,320.0 625.6,319.6"/>
<circle cx="629.6" cy="690.2" r="1"/>
</g></svg>
</div>
<div id="vscroll">
<svg class="t" style="left:2.800px;top:4.500px" width="7" height="5" viewBox="0 0 7 5" fill="none" stroke="#b0b0b0" stroke-width="1"><path d="M.8 4L3.500 1.300 6.200 4"/></svg>
<div class="t" style="left:1px;top:411px;width:11px;height:19px;border-radius:5.500px;background:#5f5f5f"></div>
<svg class="t" style="left:3px;top:838px" width="7" height="5" viewBox="0 0 7 5" fill="none" stroke="#b0b0b0" stroke-width="1"><path d="M.8 1l2.700 2.700L6.200 1"/></svg>
</div>
<div id="statusbar">
<div class="t" style="left:0;top:0;width:370px;height:11px;background:#535353"></div>
<div class="t" style="left:3px;top:1px;width:36px;height:10px;background:#454545;border:1px solid #5a5a5a;border-bottom:0"></div>
<div class="t" style="left:5px;top:3.500px;font-size:8.600px;transform:scaleX(.92);transform-origin:0 50%;margin-top:-.4px;color:#ededed">66,67%</div>
<svg class="t" style="left:42px;top:5px" width="7" height="5" viewBox="0 0 7 5" fill="none" stroke="#e0e0e0" stroke-width="1"><path d="M.8.800l2.700 2.700L6.200.8"/></svg>
<div class="t" style="left:56px;top:1px;width:37px;height:10px;background:#454545;border:1px solid #5a5a5a;border-bottom:0"></div>
<div class="t" style="left:58px;top:3.500px;font-size:8.600px;transform:scaleX(.92);transform-origin:0 50%;margin-top:-.4px;color:#ededed">0°</div>
<svg class="t" style="left:95px;top:5px" width="7" height="5" viewBox="0 0 7 5" fill="none" stroke="#e0e0e0" stroke-width="1"><path d="M.8.800l2.700 2.700L6.200.8"/></svg>
<svg class="t" style="left:111px;top:3px" width="8" height="6" viewBox="0 0 8 6" fill="#6c6c6c"><rect x="0" y="0" width="1.200" height="6"/><path d="M6 0v6L2 3z"/></svg>
<svg class="t" style="left:124px;top:3px" width="5" height="6" viewBox="0 0 5 6" fill="#6c6c6c"><path d="M4.500 0v6L.5 3z"/></svg>
<div class="t" style="left:135px;top:1px;width:30px;height:10px;background:#454545;border:1px solid #5a5a5a;border-bottom:0"></div>
<div class="t" style="left:138px;top:3.500px;font-size:8.600px;transform:scaleX(.92);transform-origin:0 50%;margin-top:-.4px;color:#ededed">1</div>
<svg class="t" style="left:168px;top:5px" width="7" height="5" viewBox="0 0 7 5" fill="none" stroke="#e0e0e0" stroke-width="1"><path d="M.8.800l2.700 2.700L6.200.8"/></svg>
<svg class="t" style="left:185px;top:3px" width="5" height="6" viewBox="0 0 5 6" fill="#dedede"><path d="M.5 0v6l4-3z"/></svg>
<svg class="t" style="left:196px;top:3px" width="8" height="6" viewBox="0 0 8 6" fill="#dedede"><path d="M1 0v6l4-3z"/><rect x="5.800" y="0" width="1.200" height="6"/></svg>
<div class="t" style="left:209px;top:1px;width:146px;height:10px;background:#4d4d4d"></div>
<div class="t" style="left:209px;top:3.500px;width:146px;text-align:center;font-size:8px;color:#e6e6e6"><span style="display:inline-block;font-size:8.600px;transform:scaleX(.92)">Toggle Direct Selection</span></div>
<svg class="t" style="left:359px;top:2.500px" width="5" height="6" viewBox="0 0 5 6" fill="#dedede"><path d="M.5 0v6l4-3z"/></svg>
<svg class="t" style="left:372px;top:2px" width="5" height="7" viewBox="0 0 5 7" fill="none" stroke="#8e8e8e" stroke-width="1"><path d="M4 .8L1.200 3.500 4 6.200"/></svg>
<div class="t" style="left:896px;top:1px;width:19px;height:9px;border-radius:4.500px;background:#5f5f5f"></div>
<svg class="t" style="left:1391px;top:2px" width="5" height="7" viewBox="0 0 5 7" fill="none" stroke="#b0b0b0" stroke-width="1"><path d="M1 .8l2.800 2.700L1 6.200"/></svg>
<div class="t" style="left:1400px;top:0;width:12px;height:11px;background:#535353"></div>
</div>
<div id="dock">
<svg class="t" style="left:19.5px;top:2px" width="7" height="5" viewBox="0 0 7 5" fill="#8c8c8c"><path d="M3 0v5L.3 2.500zM6.500 0v5L3.800 2.500z"/></svg>
<svg class="t" style="left:203.500px;top:2.500px" width="5" height="3.600" viewBox="0 0 7 5" fill="#8c8c8c"><path d="M.5 0v5l2.700-2.500zM4 0v5l2.700-2.500z"/></svg>
<div id="strip" class="t" style="left:2px;top:9px;width:27px;height:871px;background:#535353"><div class="t" style="left:6.500px;top:2.6px;width:14px;height:2.500px;background:repeating-linear-gradient(90deg,#414141 0,#414141 1.300px,#4a4a4a 1.300px,#4a4a4a 2px)"></div>
<div class="t" style="left:0;top:29.0px;width:27px;height:1.500px;background:#404040"></div>
<div class="t" style="left:6.500px;top:33.1px;width:14px;height:2.500px;background:repeating-linear-gradient(90deg,#414141 0,#414141 1.300px,#4a4a4a 1.300px,#4a4a4a 2px)"></div>
<div class="t" style="left:0;top:79.5px;width:27px;height:1.500px;background:#404040"></div>
<div class="t" style="left:6.500px;top:83.6px;width:14px;height:2.500px;background:repeating-linear-gradient(90deg,#414141 0,#414141 1.300px,#4a4a4a 1.300px,#4a4a4a 2px)"></div>
<div class="t" style="left:0;top:150.7px;width:27px;height:1.500px;background:#404040"></div>
<div class="t" style="left:6.500px;top:154.8px;width:14px;height:2.500px;background:repeating-linear-gradient(90deg,#414141 0,#414141 1.300px,#4a4a4a 1.300px,#4a4a4a 2px)"></div>
<div class="t" style="left:0;top:220.9px;width:27px;height:1.500px;background:#404040"></div>
<div class="t" style="left:6.500px;top:225.0px;width:14px;height:2.500px;background:repeating-linear-gradient(90deg,#414141 0,#414141 1.300px,#4a4a4a 1.300px,#4a4a4a 2px)"></div>
<div class="t" style="left:0;top:270.9px;width:27px;height:1.500px;background:#404040"></div>
<div class="t" style="left:6.500px;top:275.0px;width:14px;height:2.500px;background:repeating-linear-gradient(90deg,#414141 0,#414141 1.300px,#4a4a4a 1.300px,#4a4a4a 2px)"></div>
<div class="t" style="left:0;top:321.3px;width:27px;height:1.500px;background:#404040"></div>
<div class="t" style="left:6.500px;top:325.4px;width:14px;height:2.500px;background:repeating-linear-gradient(90deg,#414141 0,#414141 1.300px,#4a4a4a 1.300px,#4a4a4a 2px)"></div>
<div class="t" style="left:0;top:351.3px;width:27px;height:1.500px;background:#404040"></div>
<div class="t" style="left:6.500px;top:355.4px;width:14px;height:2.500px;background:repeating-linear-gradient(90deg,#414141 0,#414141 1.300px,#4a4a4a 1.300px,#4a4a4a 2px)"></div>
<div class="t" style="left:0;top:402.0px;width:27px;height:1.500px;background:#404040"></div>
<div class="t" style="left:6.500px;top:406.1px;width:14px;height:2.500px;background:repeating-linear-gradient(90deg,#414141 0,#414141 1.300px,#4a4a4a 1.300px,#4a4a4a 2px)"></div>
<div class="t" style="left:0;top:431.6px;width:27px;height:1.500px;background:#404040"></div>
<div class="t" style="left:6.500px;top:435.7px;width:14px;height:2.500px;background:repeating-linear-gradient(90deg,#414141 0,#414141 1.300px,#4a4a4a 1.300px,#4a4a4a 2px)"></div>
<div class="t" style="left:0;top:461.6px;width:27px;height:1.500px;background:#404040"></div>
<div class="t" style="left:6.500px;top:465.7px;width:14px;height:2.500px;background:repeating-linear-gradient(90deg,#414141 0,#414141 1.300px,#4a4a4a 1.300px,#4a4a4a 2px)"></div>
<div class="t" style="left:0;top:532.2px;width:27px;height:1.500px;background:#404040"></div>
<svg class="t" style="left:6.3px;top:12.8px" width="15" height="8" viewBox="0 0 15 8"><rect x="1" y="1.200" width="8" height="5.600" rx="2.800" fill="none" stroke="#d6d6d6" stroke-width="1.500"/><rect x="6" y="1.200" width="8" height="5.600" rx="2.800" fill="none" stroke="#d6d6d6" stroke-width="1.500"/></svg>
<svg class="t" style="left:6.3px;top:41.9px" width="15" height="11" viewBox="0 0 15 11"><path d="M7.500.5C3.500.5.5 2.800.5 5.800S3 10.500 6 10.500c1.500 0 1.300-1.200 2-1.800.9-.8 2.500.3 4.300-.7 1.300-.8 2.200-1.800 2.200-3.200C14.500 2.300 11.500.5 7.500.5z" fill="#d6d6d6"/><g fill="#535353"><circle cx="3.200" cy="5" r="1"/><circle cx="5.200" cy="2.800" r="1"/><circle cx="8.300" cy="2.300" r="1"/><circle cx="11.300" cy="3.500" r="1"/><circle cx="4.500" cy="7.800" r="1"/></g></svg>
<svg class="t" style="left:7.3px;top:61.5px" width="13" height="13" viewBox="0 0 13 13"><defs><linearGradient id="cg" x1="0" y1="1" x2="1" y2="0"><stop offset="0" stop-color="#333"/><stop offset="1" stop-color="#eee"/></linearGradient></defs><path d="M1 12V.8C7 .8 12 5.500 12.300 12z" fill="url(#cg)" stroke="#d6d6d6" stroke-width="1"/></svg>
<svg class="t" style="left:6.8px;top:89.3px" width="14" height="15" viewBox="0 0 14 15"><rect x="3.500" y="9" width="7" height="5.500" rx=".6" fill="#d6d6d6"/><path d="M7 8.500V1.500M4.500 8.500L2.500 3.500M9.500 8.500l2-4" stroke="#d6d6d6" stroke-width="1.300"/><path d="M6 .3h2l.4 3h-2.800zM1 2.500c1-1.500 2.500-1 2.800.5l-1.800 1.500zM10.500 2.500c1-1.300 3-1 3.200 1l-2.500.5z" fill="#d6d6d6"/></svg>
<svg class="t" style="left:6.8px;top:112.9px" width="14" height="10" viewBox="0 0 14 10"><rect x=".5" y=".5" width="13" height="9" fill="#777" stroke="#d6d6d6" stroke-width="1"/><g fill="#d6d6d6"><rect x="1.500" y="1.500" width="3" height="3"/><rect x="5.500" y="1.500" width="3" height="3" fill="#9a9a9a"/><rect x="9.500" y="1.500" width="3" height="3"/><rect x="1.500" y="5.500" width="3" height="3" fill="#9a9a9a"/><rect x="5.500" y="5.500" width="3" height="3"/><rect x="9.500" y="5.500" width="3" height="3" fill="#a8a8a8"/></g></svg>
<svg class="t" style="left:6.8px;top:131.2px" width="14" height="14" viewBox="0 0 14 14"><circle cx="7" cy="3.600" r="3.100" fill="#d6d6d6"/><circle cx="3.600" cy="7.800" r="3.100" fill="#d6d6d6"/><circle cx="10.400" cy="7.800" r="3.100" fill="#d6d6d6"/><path d="M6.300 6h1.400l.5 6h2v1.200H3.800V12h2z" fill="#d6d6d6"/></svg>
<svg class="t" style="left:7.3px;top:163.0px" width="13" height="10" viewBox="0 0 13 10"><rect x="0" y="0" width="13" height="1.300" fill="#d6d6d6"/><rect x="0" y="3.500" width="13" height="2" fill="#d6d6d6"/><rect x="0" y="7.300" width="13" height="2.700" fill="#d6d6d6"/></svg>
<svg class="t" style="left:6.8px;top:183.4px" width="14" height="10" viewBox="0 0 14 10"><defs><linearGradient id="gr2"><stop offset="0" stop-color="#2a2a2a"/><stop offset="1" stop-color="#f0f0f0"/></linearGradient></defs><rect x=".5" y=".5" width="13" height="9" fill="url(#gr2)" stroke="#d6d6d6" stroke-width="1"/></svg>
<svg class="t" style="left:6.8px;top:202.6px" width="14" height="13" viewBox="0 0 14 13"><circle cx="5.500" cy="5.500" r="5" fill="#d6d6d6"/><circle cx="8.500" cy="7.500" r="4.600" fill="#8a8a8a" stroke="#d6d6d6" stroke-width=".9"/></svg>
<svg class="t" style="left:6.8px;top:231.7px" width="14" height="14" viewBox="0 0 14 14"><circle cx="7" cy="7" r="4.300" fill="#d6d6d6"/><circle cx="7" cy="7" r="6.200" fill="none" stroke="#d6d6d6" stroke-width="1" stroke-dasharray="1 1.440"/></svg>
<svg class="t" style="left:6.8px;top:252.6px" width="14" height="13" viewBox="0 0 14 13"><rect x="3.500" y=".6" width="9.800" height="9.800" fill="none" stroke="#d6d6d6" stroke-width="1.100"/><rect x=".6" y="6.500" width="5.500" height="5.500" rx="1" fill="#535353" stroke="#d6d6d6" stroke-width="1"/><circle cx="3.300" cy="9.300" r="1.400" fill="#d6d6d6"/></svg>
<svg class="t" style="left:6.8px;top:282.1px" width="14" height="14" viewBox="0 0 14 14"><path d="M6.500 2.500H1V13h10.500V7.500" fill="none" stroke="#d6d6d6" stroke-width="1.400"/><path d="M8 .8h5.200V6M13 1L6.500 7.500" fill="none" stroke="#d6d6d6" stroke-width="1.400"/></svg>
<svg class="t" style="left:6.8px;top:302.1px" width="14" height="14" viewBox="0 0 14 14"><rect x=".6" y=".6" width="8.500" height="8.500" fill="none" stroke="#d6d6d6" stroke-width="1.100"/><rect x="4.500" y="5.500" width="9" height="7.800" fill="#535353" stroke="#d6d6d6" stroke-width="1.100"/></svg>
<svg class="t" style="left:6.8px;top:332.6px" width="14" height="13" viewBox="0 0 14 13"><path d="M1.500.5h11a1 1 0 0 1 1 1v7a1 1 0 0 1-1 1H6L3 12.500V9.500H1.500a1 1 0 0 1-1-1v-7a1 1 0 0 1 1-1z" fill="#d6d6d6"/></svg>
<svg class="t" style="left:6.3px;top:362.3px" width="15" height="14" viewBox="0 0 15 14"><path d="M6.500 9.500L10 .8h1l3.500 8.700h-1.300l-1-2.600H8.800l-1 2.600zM9.200 5.800h2.600L10.500 2.300z" fill="#d6d6d6"/><rect x=".6" y="7" width="4" height="4" fill="none" stroke="#d6d6d6" stroke-width=".9"/><rect x="2.600" y="9" width="4" height="4" fill="#535353" stroke="#d6d6d6" stroke-width=".9"/></svg>
<svg class="t" style="left:6.3px;top:383.0px" width="15" height="14" viewBox="0 0 15 14"><path d="M8 .8h6v1.200h-1.200v8.500h-1.200V2h-1.200v8.500H9.200V6C7.500 6 6.500 5 6.500 3.400S7.600.8 8 .8z" fill="#d6d6d6"/><rect x=".6" y="7" width="4" height="4" fill="none" stroke="#d6d6d6" stroke-width=".9"/><rect x="2.600" y="9" width="4" height="4" fill="#535353" stroke="#d6d6d6" stroke-width=".9"/></svg>
<svg class="t" style="left:6.3px;top:411.8px" width="15" height="15" viewBox="0 0 15 15"><circle cx="6.800" cy="7.500" r="5.300" fill="#d6d6d6"/><path d="M7.500 1.200a6.300 6.300 0 0 1 0 12.600" fill="none" stroke="#d6d6d6" stroke-width="1"/><circle cx="7.500" cy="1.500" r="1.300" fill="#d6d6d6"/><circle cx="13.300" cy="7.500" r="1.300" fill="#d6d6d6"/><circle cx="7.500" cy="13.500" r="1.300" fill="#d6d6d6"/><path d="M7.500 2.800a4.800 4.800 0 0 1 0 9.400" fill="none" stroke="#535353" stroke-width=".9"/></svg>
<svg class="t" style="left:7.3px;top:443.5px" width="13" height="13" viewBox="0 0 13 13"><rect x=".5" y=".5" width="7.500" height="7.500" fill="#d6d6d6"/><rect x="5" y="5" width="7.500" height="7.500" fill="#d6d6d6" stroke="#535353" stroke-width=".8"/><rect x="5" y="5" width="3" height="3" fill="#9a9a9a" stroke="#d6d6d6" stroke-width=".7"/></svg>
<svg class="t" style="left:7.3px;top:472.8px" width="13" height="13" viewBox="0 0 13 13"><path d="M5.500 2.500H12.500V12.500H1.500V7z" fill="#d6d6d6"/><circle cx="7.500" cy="6.500" r="3.300" fill="#535353"/><circle cx="3.800" cy="3.800" r="3.200" fill="#d6d6d6"/></svg>
<svg class="t" style="left:7.8px;top:492.3px" width="12" height="14" viewBox="0 0 12 14"><rect x=".5" y=".5" width="11" height="10" fill="#777" stroke="#d6d6d6" stroke-width="1"/><path d="M.5.500l5.500 5 5.500-5M.5 10.500l5.500-5 5.500 5" fill="none" stroke="#d6d6d6" stroke-width=".9"/><path d="M.5 13.500L6 9l5.500 4.500z" fill="#d6d6d6"/></svg>
<svg class="t" style="left:7.8px;top:512.8px" width="12" height="14" viewBox="0 0 12 14"><path d="M.8.500h7l3.400 3.400v9.600H.8z" fill="#d6d6d6"/><path d="M7.800.5v3.400h3.400" fill="none" stroke="#535353" stroke-width=".8"/><circle cx="6" cy="9" r="3" fill="#535353"/><rect x="5.500" y="8.300" width="1.100" height="2.500" fill="#d6d6d6"/><circle cx="6" cy="7.200" r=".7" fill="#d6d6d6"/></svg></div>
<div id="props" class="t" style="left:31px;top:9px;width:183px;height:436px;background:#535353">
<div class="t" style="left:51px;top:0;width:132px;height:19.500px;background:#424242"></div>
<div class="lbl" style="left:7px;top:5.500px;font-weight:bold;color:#f4f4f4;font-size:8.400px">Properties</div>
<div class="lbl" style="left:7px;top:28.500px">No Selection</div>
<div class="sep" style="left:0;top:44px"></div>
<div class="lbl" style="left:7px;top:53.500px">Document</div>
<div class="lbl" style="left:0;width:58px;text-align:right;top:73.500px;transform-origin:100% 50%">Units:</div>
<div class="t" style="left:62.500px;top:70px;width:83px;height:14px;background:#454545;border:1px solid #686868;border-radius:2px"></div>
<div class="lbl" style="left:67px;top:73.500px;color:#f4f4f4;font-weight:bold;font-size:8.200px">Millimeters</div>
<svg class="t" style="left:135px;top:75px" width="7" height="5" viewBox="0 0 7 5" fill="none" stroke="#e8e8e8" stroke-width="1"><path d="M.8.800l2.700 2.700L6.200.8"/></svg>
<div class="lbl" style="left:0;width:58px;text-align:right;top:94.500px;transform-origin:100% 50%">Artboard:</div>
<div class="t" style="left:62.500px;top:91px;width:54px;height:14px;border:1px solid #686868;border-radius:2px"></div>
<div class="t" style="left:63.500px;top:92px;width:39px;height:12px;background:#454545;border-right:1px solid #686868"></div>
<div class="lbl" style="left:66px;top:94px;color:#f4f4f4">1</div>
<svg class="t" style="left:106px;top:96px" width="7" height="5" viewBox="0 0 7 5" fill="none" stroke="#e8e8e8" stroke-width="1"><path d="M.8.800l2.700 2.700L6.200.8"/></svg>
<svg class="t" style="left:125.500px;top:95px" width="4" height="6" viewBox="0 0 4 6" fill="#666"><path d="M4 0v6L0 3z"/></svg>
<svg class="t" style="left:141px;top:95px" width="4" height="6" viewBox="0 0 4 6" fill="#e6e6e6"><path d="M0 0v6l4-3z"/></svg>
<div class="btn" style="left:62px;top:111.500px;width:84px;height:15px;line-height:13px"><span style="display:inline-block;font-size:8.200px;transform:scaleX(.92)">Edit Artboards</span></div>
<div class="sep" style="left:0;top:137px"></div>
<div class="lbl" style="left:7px;top:147.500px">Ruler &amp; Grids</div>
<div class="sep" style="left:0;top:164px"></div>
<div class="lbl" style="left:7px;top:175.500px">Guides</div>
<div class="sep" style="left:0;top:192px"></div>
<div class="lbl" style="left:7px;top:202.500px">Snap Options</div>
<svg class="t" style="left:71.3px;top:144.8px" width="13" height="13" viewBox="0 0 13 13"><path d="M.5.500h12v3.200H3.700v8.800H.5z" fill="#d9d9d9"/><path d="M5 .5v2M7 .5v2M9 .5v2M11 .5v2M.5 5h2M.5 7h2M.5 9h2" stroke="#535353" stroke-width=".7"/></svg>
<svg class="t" style="left:93.6px;top:144.8px" width="13" height="13" viewBox="0 0 13 13" fill="none" stroke="#d9d9d9" stroke-width=".9"><rect x=".6" y=".6" width="11.800" height="11.800" rx=".8"/><path d="M4.500.6v11.800M8.500.6v11.800M.6 4.500h11.800M.6 8.500h11.800"/></svg>
<svg class="t" style="left:115.3px;top:144.8px" width="13" height="13" viewBox="0 0 13 13"><rect x=".6" y=".6" width="11.800" height="11.800" rx=".8" fill="#8d8d8d" stroke="#d9d9d9" stroke-width=".9"/><g fill="#535353"><circle cx="3" cy="3" r="1.300"/><circle cx="6.500" cy="3" r="1.300"/><circle cx="10" cy="3" r="1.300"/><circle cx="3" cy="6.500" r="1.300"/><circle cx="6.500" cy="6.500" r="1.300"/><circle cx="10" cy="6.500" r="1.300"/><circle cx="3" cy="10" r="1.300"/><circle cx="6.500" cy="10" r="1.300"/><circle cx="10" cy="10" r="1.300"/></g></svg>
<div class="t" style="left:70.0px;top:171.0px;width:16px;height:16px;background:#2f2f2f;border-radius:1.500px"></div>
<svg class="t" style="left:72.0px;top:173.0px" width="12" height="12" viewBox="0 0 12 12" stroke="#fff" stroke-width="1.100"><path d="M2.500 0v12M5 0v12M0 4h12M0 9h12"/></svg>
<svg class="t" style="left:93.5px;top:173.0px" width="13" height="13" viewBox="0 0 13 13" stroke="#d9d9d9" stroke-width=".9" fill="none"><path d="M2.500 0v12M4.500 0v12M0 4h12M0 9h7"/><rect x="7.500" y="8.500" width="5" height="4" fill="#d9d9d9" stroke="none"/><path d="M8.500 8.500V7a1.500 1.500 0 0 1 3 0"/></svg>
<div class="t" style="left:113.7px;top:171.0px;width:16px;height:16px;background:#2f2f2f;border-radius:1.500px"></div>
<svg class="t" style="left:115.3px;top:173.0px" width="13" height="13" viewBox="0 0 13 13" stroke="#fff" stroke-width="1" fill="none"><path d="M3 0v12M0 4.500h11.500M7 2.500L5 4.500l2 2"/><path d="M10.500 7l-2.300 2.800h1.600l-1 2.400 2.800-3.200H10z" fill="#fff" stroke="none"/></svg>
<div class="t" style="left:70.0px;top:198.5px;width:16px;height:16px;background:#2f2f2f;border-radius:1.500px"></div>
<svg class="t" style="left:71.6px;top:200.0px" width="13" height="13" viewBox="0 0 13 13" stroke="#fff" stroke-width="1.100" fill="none"><path d="M2.500 1v11"/><circle cx="2.500" cy="6.500" r="1.300" fill="#fff" stroke="none"/><path d="M6 4.500h3.500a2 2 0 0 1 0 4H6" stroke-width="1.500"/></svg>
<svg class="t" style="left:93.5px;top:199.5px" width="13" height="14" viewBox="0 0 13 14" stroke="#d9d9d9" stroke-width=".8" fill="none"><path d="M1 .5v13M2.800 .5v13M4.600.5v13M0 2h5.500M0 4.500h5.500M0 7h5.500M0 9.500h5.500M0 12h5.500"/><path d="M6.500 5h3.500a2 2 0 0 1 0 4H6.500" stroke-width="1.500"/></svg>
<svg class="t" style="left:115.3px;top:200.0px" width="13" height="13" viewBox="0 0 13 13" stroke="#d9d9d9" stroke-width="1.500" fill="none"><rect x="1" y="1" width="2.600" height="2.600" fill="#d9d9d9" stroke="none"/><rect x="1" y="5.200" width="2.600" height="2.600" fill="#d9d9d9" stroke="none"/><rect x="1" y="9.400" width="2.600" height="2.600" fill="#d9d9d9" stroke="none"/><path d="M6 4.500h3.500a2 2 0 0 1 0 4H6"/></svg>
<div class="sep" style="left:0;top:220px"></div>
<div class="lbl" style="left:7px;top:229.500px">Preferences</div>
<div class="lbl" style="left:7px;top:248.500px">Keyboard Increment:</div>
<div class="t" style="left:84.500px;top:244.500px;width:43px;height:14px;background:#454545;border:1px solid #686868;border-radius:2px"></div>
<div class="lbl" style="left:88px;top:247.500px;color:#f4f4f4">1 mm</div>
<div class="chk" style="left:9px;top:268px"></div><div class="lbl" style="left:20px;top:269px;font-size:8.300px">Use Preview Bounds</div>
<div class="chk" style="left:9px;top:285.500px"></div><div class="lbl" style="left:20px;top:286.500px;font-size:8.300px">Scale Corners</div>
<div class="chk" style="left:9px;top:303px;background:#e8e8e8;border-color:#e8e8e8"></div><svg class="t" style="left:10px;top:304px" width="7" height="7" viewBox="0 0 7 7" fill="none" stroke="#333" stroke-width="1.300"><path d="M1 3.500l1.800 2L6 1.200"/></svg><div class="lbl" style="left:20px;top:304px;font-size:8.300px">Scale Strokes &amp; Effects</div>
<div class="sep" style="left:0;top:324px"></div>
<div class="lbl" style="left:7px;top:336.500px">Quick Actions</div>
<div class="btn" style="left:7px;top:353px;width:85px;height:15px;line-height:13px"><span style="display:inline-block;font-size:8.200px;transform:scaleX(.92)">Document Setup</span></div>
<div class="btn" style="left:99px;top:353px;width:74px;height:15px;line-height:13px"><span style="display:inline-block;font-size:8.200px;transform:scaleX(.92)">Preferences</span></div>
</div>
<div class="t" style="left:0;top:879px;width:214px;height:1px;background:rgba(0,0,0,.22);z-index:5"></div>
<div id="layers" class="t" style="left:31px;top:446px;width:183px;height:434px;background:#535353"><div class="t" style="left:37px;top:0;width:146px;height:20px;background:#424242"></div>
<div class="lbl" style="left:7px;top:5.500px;font-weight:bold;color:#f4f4f4;font-size:8.400px">Layers</div>
<svg class="t" style="left:170.5px;top:6.0px" width="8" height="7" viewBox="0 0 8 7" stroke="#9c9c9c" stroke-width="1"><path d="M0 .8h8M0 3.200h8M0 5.600h8"/></svg>
<div class="t" style="left:3.5px;top:24.6px;width:175.500px;height:394px;border:1px solid #5a5a5a;border-top:0;background:#535353"></div>
<div class="t" style="left:3.8px;top:25.2px;width:174.500px;height:14.8px;background:#54647f"></div>
<svg class="t" style="left:6.8px;top:29.7px" width="9" height="6" viewBox="0 0 9 6" fill="none" stroke="#d2d2d2" stroke-width=".8"><path d="M.4 3C1.500 1.200 3 .4 4.500.4S7.500 1.200 8.600 3C7.500 4.800 6 5.600 4.500 5.600S1.500 4.800.4 3z"/><circle cx="4.500" cy="3" r="1.400" fill="#d2d2d2" stroke="none"/></svg>
<div class="t" style="left:35.6px;top:25.7px;width:2.200px;height:13.8px;background:#4f7df3"></div>
<svg class="t" style="left:43.2px;top:30.4px" width="7" height="5" viewBox="0 0 7 5" fill="none" stroke="#e0e0e0" stroke-width="1"><path d="M.8.800l2.700 2.700L6.200.8"/></svg>
<svg class="t" style="left:56.7px;top:25.8px" width="13.300" height="13.300" viewBox="0 0 13 13"><rect x=".4" y=".4" width="12.200" height="12.200" rx="1.200" fill="#fff" stroke="#222" stroke-width="1"/><rect x="2" y="2.500" width="3" height="1" fill="#c44"/><path d="M5 6l1.500 2.500L7 5.500z" fill="#c33"/></svg>
<div class="lbl" style="left:73.5px;top:28.9px;color:#ececec">Layer 1</div>
<svg class="t" style="left:155.7px;top:28.8px" width="8" height="8" viewBox="0 0 8 8"><circle cx="4" cy="4" r="2.900" fill="none" stroke="#d2d2d2" stroke-width=".95"/></svg>
<div class="t" style="left:3.8px;top:54.8px;width:174.500px;height:1px;background:#4b4b4b"></div>
<div class="t" style="left:35.6px;top:41.1px;width:2.200px;height:13.8px;background:#4f7df3"></div>
<svg class="t" style="left:60.0px;top:44.2px" width="5" height="7" viewBox="0 0 5 7" fill="none" stroke="#e0e0e0" stroke-width="1"><path d="M1 .8l2.800 2.700L1 6.200"/></svg>
<svg class="t" style="left:73.5px;top:41.2px" width="13.300" height="13.300" viewBox="0 0 13 13"><rect x=".4" y=".4" width="12.200" height="12.200" rx="1.200" fill="#fff" stroke="#222" stroke-width="1"/><rect x="1" y="1" width="11" height="1.500" fill="#777"/><rect x="1" y="3.500" width="6" height="2.500" fill="#d34"/><rect x="1" y="6.500" width="6" height="1.500" fill="#e88"/><rect x="1" y="8.500" width="6" height="2.500" fill="#d34"/><rect x="8" y="3" width="4" height="8" fill="#eee"/></svg>
<div class="lbl" style="left:90.8px;top:44.2px;color:#ececec">&lt;Group&gt;</div>
<svg class="t" style="left:155.7px;top:44.1px" width="8" height="8" viewBox="0 0 8 8"><circle cx="4" cy="4" r="2.900" fill="none" stroke="#d2d2d2" stroke-width=".95"/></svg>
<div class="t" style="left:3.8px;top:70.2px;width:174.500px;height:1px;background:#4b4b4b"></div>
<svg class="t" style="left:6.8px;top:60.3px" width="9" height="6" viewBox="0 0 9 6" fill="none" stroke="#d2d2d2" stroke-width=".8"><path d="M.4 3C1.500 1.200 3 .4 4.500.4S7.500 1.200 8.600 3C7.500 4.800 6 5.600 4.500 5.600S1.500 4.800.4 3z"/><circle cx="4.500" cy="3" r="1.400" fill="#d2d2d2" stroke="none"/></svg>
<div class="t" style="left:35.6px;top:56.3px;width:2.200px;height:13.8px;background:#4f7df3"></div>
<svg class="t" style="left:73.5px;top:56.4px" width="13.300" height="13.300" viewBox="0 0 13 13"><rect x=".4" y=".4" width="12.200" height="12.200" rx="1.200" fill="#fff" stroke="#222" stroke-width="1"/><text x="6.500" y="10.800" font-size="11" font-weight="bold" text-anchor="middle" fill="#000" font-family="Liberation Sans,sans-serif">2</text></svg>
<div class="lbl" style="left:90.8px;top:59.5px;color:#ececec">2</div>
<svg class="t" style="left:155.7px;top:59.4px" width="8" height="8" viewBox="0 0 8 8"><circle cx="4" cy="4" r="2.900" fill="none" stroke="#d2d2d2" stroke-width=".95"/></svg>
<div class="t" style="left:3.8px;top:85.5px;width:174.500px;height:1px;background:#4b4b4b"></div>
<svg class="t" style="left:6.8px;top:75.6px" width="9" height="6" viewBox="0 0 9 6" fill="none" stroke="#d2d2d2" stroke-width=".8"><path d="M.4 3C1.500 1.200 3 .4 4.500.4S7.500 1.200 8.600 3C7.500 4.800 6 5.600 4.500 5.600S1.500 4.800.4 3z"/><circle cx="4.500" cy="3" r="1.400" fill="#d2d2d2" stroke="none"/></svg>
<div class="t" style="left:35.6px;top:71.6px;width:2.200px;height:13.8px;background:#4f7df3"></div>
<svg class="t" style="left:73.5px;top:71.7px" width="13.300" height="13.300" viewBox="0 0 13 13"><rect x=".4" y=".4" width="12.200" height="12.200" rx="1.200" fill="#fff" stroke="#222" stroke-width="1"/><text x="6.500" y="10.800" font-size="11" font-weight="bold" text-anchor="middle" fill="#000" font-family="Liberation Sans,sans-serif">1</text></svg>
<div class="lbl" style="left:90.8px;top:74.8px;color:#ececec">1</div>
<svg class="t" style="left:155.7px;top:74.7px" width="8" height="8" viewBox="0 0 8 8"><circle cx="4" cy="4" r="2.900" fill="none" stroke="#d2d2d2" stroke-width=".95"/></svg>
<div class="t" style="left:3.8px;top:100.9px;width:174.500px;height:1px;background:#4b4b4b"></div>
<div class="t" style="left:35.6px;top:87.0px;width:2.200px;height:13.8px;background:#4f7df3"></div>
<svg class="t" style="left:60.0px;top:90.2px" width="5" height="7" viewBox="0 0 5 7" fill="none" stroke="#e0e0e0" stroke-width="1"><path d="M1 .8l2.800 2.700L1 6.200"/></svg>
<svg class="t" style="left:73.5px;top:87.1px" width="13.300" height="13.300" viewBox="0 0 13 13"><rect x=".4" y=".4" width="12.200" height="12.200" rx="1.200" fill="#fff" stroke="#222" stroke-width="1"/><path d="M2 2.500h9M2 5h4M7 5h4M2 7.500h9" stroke="#333" stroke-width=".9"/><path d="M3 3.800h3M7.500 6.300h3M2 10h5" stroke="#d33" stroke-width=".9"/><rect x="10.500" y="8" width="1.500" height="4" fill="#444"/></svg>
<div class="lbl" style="left:90.8px;top:90.2px;color:#ececec">&lt;Group&gt;</div>
<svg class="t" style="left:155.7px;top:90.1px" width="8" height="8" viewBox="0 0 8 8"><circle cx="4" cy="4" r="2.900" fill="none" stroke="#d2d2d2" stroke-width=".95"/></svg>
<div class="t" style="left:3.8px;top:116.1px;width:174.500px;height:1px;background:#4b4b4b"></div>
<svg class="t" style="left:6.8px;top:106.2px" width="9" height="6" viewBox="0 0 9 6" fill="none" stroke="#d2d2d2" stroke-width=".8"><path d="M.4 3C1.500 1.200 3 .4 4.500.4S7.500 1.200 8.600 3C7.500 4.800 6 5.600 4.500 5.600S1.500 4.800.4 3z"/><circle cx="4.500" cy="3" r="1.400" fill="#d2d2d2" stroke="none"/></svg>
<div class="t" style="left:35.6px;top:102.3px;width:2.200px;height:13.8px;background:#4f7df3"></div>
<svg class="t" style="left:73.5px;top:102.4px" width="13.300" height="13.300" viewBox="0 0 13 13"><rect x=".4" y=".4" width="12.200" height="12.200" rx="1.200" fill="#fff" stroke="#222" stroke-width="1"/><path d="M3 1c5 1 7.500 5 7.500 11" fill="none" stroke="#999" stroke-width=".6"/></svg>
<div class="lbl" style="left:90.8px;top:105.4px;color:#ececec">&lt;Path&gt;</div>
<svg class="t" style="left:155.7px;top:105.3px" width="8" height="8" viewBox="0 0 8 8"><circle cx="4" cy="4" r="3" fill="#8e8e8e" stroke="#a0a0a0" stroke-width=".7"/></svg>
<div class="t" style="left:3.8px;top:131.5px;width:174.500px;height:1px;background:#4b4b4b"></div>
<svg class="t" style="left:6.8px;top:121.6px" width="9" height="6" viewBox="0 0 9 6" fill="none" stroke="#d2d2d2" stroke-width=".8"><path d="M.4 3C1.500 1.200 3 .4 4.500.4S7.500 1.200 8.600 3C7.500 4.800 6 5.600 4.500 5.600S1.500 4.800.4 3z"/><circle cx="4.500" cy="3" r="1.400" fill="#d2d2d2" stroke="none"/></svg>
<div class="t" style="left:35.6px;top:117.6px;width:2.200px;height:13.8px;background:#4f7df3"></div>
<svg class="t" style="left:73.5px;top:117.7px" width="13.300" height="13.300" viewBox="0 0 13 13"><rect x=".4" y=".4" width="12.200" height="12.200" rx="1.200" fill="#fff" stroke="#222" stroke-width="1"/><path d="M7 1c3 3 3.500 8 1.500 11" fill="none" stroke="#aaa" stroke-width=".6"/></svg>
<div class="lbl" style="left:90.8px;top:120.8px;color:#ececec">&lt;Path&gt;</div>
<svg class="t" style="left:155.7px;top:120.7px" width="8" height="8" viewBox="0 0 8 8"><circle cx="4" cy="4" r="3" fill="#8e8e8e" stroke="#a0a0a0" stroke-width=".7"/></svg>
<div class="t" style="left:3.8px;top:146.8px;width:174.500px;height:1px;background:#4b4b4b"></div>
<svg class="t" style="left:6.8px;top:136.9px" width="9" height="6" viewBox="0 0 9 6" fill="none" stroke="#d2d2d2" stroke-width=".8"><path d="M.4 3C1.500 1.200 3 .4 4.500.4S7.500 1.200 8.600 3C7.500 4.800 6 5.600 4.500 5.600S1.500 4.800.4 3z"/><circle cx="4.500" cy="3" r="1.400" fill="#d2d2d2" stroke="none"/></svg>
<div class="t" style="left:35.6px;top:133.0px;width:2.200px;height:13.8px;background:#4f7df3"></div>
<svg class="t" style="left:73.5px;top:133.1px" width="13.300" height="13.300" viewBox="0 0 13 13"><rect x=".4" y=".4" width="12.200" height="12.200" rx="1.200" fill="#fff" stroke="#222" stroke-width="1"/><path d="M8 1c2 3 1.500 7-2 11" fill="none" stroke="#888" stroke-width=".6"/><path d="M11 1v11" stroke="#555" stroke-width=".8"/></svg>
<div class="lbl" style="left:90.8px;top:136.1px;color:#ececec">&lt;Path&gt;</div>
<svg class="t" style="left:155.7px;top:136.0px" width="8" height="8" viewBox="0 0 8 8"><circle cx="4" cy="4" r="3" fill="#8e8e8e" stroke="#a0a0a0" stroke-width=".7"/></svg>
<div class="t" style="left:3.8px;top:162.1px;width:174.500px;height:1px;background:#4b4b4b"></div>
<svg class="t" style="left:6.8px;top:152.3px" width="9" height="6" viewBox="0 0 9 6" fill="none" stroke="#d2d2d2" stroke-width=".8"><path d="M.4 3C1.500 1.200 3 .4 4.500.4S7.500 1.200 8.600 3C7.500 4.800 6 5.600 4.500 5.600S1.500 4.800.4 3z"/><circle cx="4.500" cy="3" r="1.400" fill="#d2d2d2" stroke="none"/></svg>
<div class="t" style="left:35.6px;top:148.3px;width:2.200px;height:13.8px;background:#4f7df3"></div>
<svg class="t" style="left:73.5px;top:148.4px" width="13.300" height="13.300" viewBox="0 0 13 13"><rect x=".4" y=".4" width="12.200" height="12.200" rx="1.200" fill="#fff" stroke="#222" stroke-width="1"/><path d="M1.500 6.500h10" stroke="#888" stroke-width="1" stroke-dasharray="1.500 .6"/></svg>
<div class="lbl" style="left:90.8px;top:151.5px;color:#ececec">иконка</div>
<svg class="t" style="left:155.7px;top:151.4px" width="8" height="8" viewBox="0 0 8 8"><circle cx="4" cy="4" r="3" fill="#8e8e8e" stroke="#a0a0a0" stroke-width=".7"/></svg>
<div class="t" style="left:3.8px;top:177.4px;width:174.500px;height:1px;background:#4b4b4b"></div>
<svg class="t" style="left:6.8px;top:167.5px" width="9" height="6" viewBox="0 0 9 6" fill="none" stroke="#d2d2d2" stroke-width=".8"><path d="M.4 3C1.500 1.200 3 .4 4.500.4S7.500 1.200 8.600 3C7.500 4.800 6 5.600 4.500 5.600S1.500 4.800.4 3z"/><circle cx="4.500" cy="3" r="1.400" fill="#d2d2d2" stroke="none"/></svg>
<div class="t" style="left:35.6px;top:163.5px;width:2.200px;height:13.8px;background:#4f7df3"></div>
<svg class="t" style="left:73.5px;top:163.7px" width="13.300" height="13.300" viewBox="0 0 13 13"><rect x=".4" y=".4" width="12.200" height="12.200" rx="1.200" fill="#fff" stroke="#222" stroke-width="1"/><path d="M1.500 6.500h10" stroke="#aaa" stroke-width=".8" stroke-dasharray="1 .5"/></svg>
<div class="lbl" style="left:90.8px;top:166.7px;color:#ececec">горизон...</div>
<svg class="t" style="left:155.7px;top:166.6px" width="8" height="8" viewBox="0 0 8 8"><circle cx="4" cy="4" r="3" fill="#8e8e8e" stroke="#a0a0a0" stroke-width=".7"/></svg>
<div class="t" style="left:3.8px;top:192.8px;width:174.500px;height:1px;background:#4b4b4b"></div>
<svg class="t" style="left:6.8px;top:182.9px" width="9" height="6" viewBox="0 0 9 6" fill="none" stroke="#d2d2d2" stroke-width=".8"><path d="M.4 3C1.500 1.200 3 .4 4.500.4S7.500 1.200 8.600 3C7.500 4.800 6 5.600 4.500 5.600S1.500 4.800.4 3z"/><circle cx="4.500" cy="3" r="1.400" fill="#d2d2d2" stroke="none"/></svg>
<div class="t" style="left:35.6px;top:178.9px;width:2.200px;height:13.8px;background:#4f7df3"></div>
<svg class="t" style="left:60.0px;top:182.1px" width="5" height="7" viewBox="0 0 5 7" fill="none" stroke="#e0e0e0" stroke-width="1"><path d="M1 .8l2.800 2.700L1 6.200"/></svg>
<svg class="t" style="left:73.5px;top:179.0px" width="13.300" height="13.300" viewBox="0 0 13 13"><rect x=".4" y=".4" width="12.200" height="12.200" rx="1.200" fill="#fff" stroke="#222" stroke-width="1"/><path d="M1.500 6l7 2 2.500-5.500L10 11z" fill="#cb3846"/></svg>
<div class="lbl" style="left:90.8px;top:182.1px;color:#ececec">&lt;Group&gt;</div>
<svg class="t" style="left:155.7px;top:182.0px" width="8" height="8" viewBox="0 0 8 8"><circle cx="4" cy="4" r="2.900" fill="none" stroke="#d2d2d2" stroke-width=".95"/></svg>
<div class="t" style="left:3.8px;top:208.0px;width:174.500px;height:1px;background:#4b4b4b"></div>
<svg class="t" style="left:6.8px;top:198.2px" width="9" height="6" viewBox="0 0 9 6" fill="none" stroke="#d2d2d2" stroke-width=".8"><path d="M.4 3C1.500 1.200 3 .4 4.500.4S7.500 1.200 8.600 3C7.500 4.800 6 5.600 4.500 5.600S1.500 4.800.4 3z"/><circle cx="4.500" cy="3" r="1.400" fill="#d2d2d2" stroke="none"/></svg>
<div class="t" style="left:35.6px;top:194.3px;width:2.200px;height:13.8px;background:#4f7df3"></div>
<svg class="t" style="left:60.0px;top:197.4px" width="5" height="7" viewBox="0 0 5 7" fill="none" stroke="#e0e0e0" stroke-width="1"><path d="M1 .8l2.800 2.700L1 6.200"/></svg>
<svg class="t" style="left:73.5px;top:194.4px" width="13.300" height="13.300" viewBox="0 0 13 13"><rect x=".4" y=".4" width="12.200" height="12.200" rx="1.200" fill="#fff" stroke="#222" stroke-width="1"/><path d="M2 8.500l6.500-1.500L9.500 2l2 6.500z" fill="#cb3846"/><path d="M2 10h9.500M2 11.500h7" stroke="#999" stroke-width=".7"/></svg>
<div class="lbl" style="left:90.8px;top:197.4px;color:#ececec">&lt;Group&gt;</div>
<svg class="t" style="left:155.7px;top:197.3px" width="8" height="8" viewBox="0 0 8 8"><circle cx="4" cy="4" r="2.900" fill="none" stroke="#d2d2d2" stroke-width=".95"/></svg>
<div class="t" style="left:3.8px;top:223.3px;width:174.500px;height:1px;background:#4b4b4b"></div>
<svg class="t" style="left:6.8px;top:213.5px" width="9" height="6" viewBox="0 0 9 6" fill="none" stroke="#d2d2d2" stroke-width=".8"><path d="M.4 3C1.500 1.200 3 .4 4.500.4S7.500 1.200 8.600 3C7.500 4.800 6 5.600 4.500 5.600S1.500 4.800.4 3z"/><circle cx="4.500" cy="3" r="1.400" fill="#d2d2d2" stroke="none"/></svg>
<div class="t" style="left:35.6px;top:209.5px;width:2.200px;height:13.8px;background:#4f7df3"></div>
<svg class="t" style="left:60.0px;top:212.7px" width="5" height="7" viewBox="0 0 5 7" fill="none" stroke="#e0e0e0" stroke-width="1"><path d="M1 .8l2.800 2.700L1 6.200"/></svg>
<svg class="t" style="left:73.5px;top:209.6px" width="13.300" height="13.300" viewBox="0 0 13 13"><rect x=".4" y=".4" width="12.200" height="12.200" rx="1.200" fill="#fff" stroke="#222" stroke-width="1"/><path d="M1.500 6.500h10" stroke="#c99" stroke-width="1.200" stroke-dasharray="2 .5"/><path d="M1 5.800l2 .5.700-1.600-.2 2.300z" fill="#cb3846"/></svg>
<div class="lbl" style="left:90.8px;top:212.7px;color:#ececec">&lt;Group&gt;</div>
<svg class="t" style="left:155.7px;top:212.6px" width="8" height="8" viewBox="0 0 8 8"><circle cx="4" cy="4" r="2.900" fill="none" stroke="#d2d2d2" stroke-width=".95"/></svg>
<div class="t" style="left:19.0px;top:25.2px;width:1px;height:199.5px;background:rgba(60,60,60,.45)"></div>
<div class="t" style="left:33.8px;top:25.2px;width:1px;height:199.5px;background:rgba(60,60,60,.45)"></div>
<div class="t" style="left:151.5px;top:25.2px;width:1px;height:199.5px;background:rgba(60,60,60,.45)"></div>
<svg class="t" style="left:173.3px;top:25.2px" width="5" height="5" viewBox="0 0 5 5"><path d="M0 0h5v5z" fill="#e8e8e8"/></svg>
<div class="lbl" style="left:4.0px;top:423.0px;color:#e6e6e6">1 Layer</div>
<svg class="t" style="left:58.0px;top:421.5px" width="10" height="10" viewBox="0 0 10 10" fill="none" stroke="#d4d4d4" stroke-width="1"><path d="M4.500 2H1v7h7V5.500M6 .8h3.200V4M9 1L5 5"/></svg>
<svg class="t" style="left:77.5px;top:421.5px" width="10" height="10" viewBox="0 0 10 10" fill="none" stroke="#6e6e6e" stroke-width="1"><circle cx="4" cy="4" r="2.800"/><path d="M6 6l3 3"/></svg>
<svg class="t" style="left:96.0px;top:421.5px" width="10" height="10" viewBox="0 0 10 10" fill="none" stroke="#d4d4d4" stroke-width=".9"><rect x=".5" y=".5" width="6.500" height="6.500" rx="1"/><rect x="2" y="2" width="3.500" height="3.500" fill="#d4d4d4" stroke="none"/><rect x="3" y="3" width="6.500" height="6.500" rx="1" stroke="#8a8a8a"/></svg>
<svg class="t" style="left:113.0px;top:421.5px" width="13" height="10" viewBox="0 0 13 10" fill="none" stroke="#d4d4d4" stroke-width=".9"><path d="M.5 0v3h3M2.500 1.500L4 3 2.500 4.500"/><rect x="5.500" y="1.500" width="7" height="7" rx="1"/><path d="M9 3.200v3.600M7.200 5h3.600"/></svg>
<svg class="t" style="left:134.4px;top:421.5px" width="10" height="10" viewBox="0 0 10 10" fill="none" stroke="#d4d4d4" stroke-width=".9"><rect x=".8" y=".8" width="8.400" height="8.400" rx="1"/><path d="M5 3v4M3 5h4"/></svg>
<svg class="t" style="left:153.2px;top:421.5px" width="9" height="10" viewBox="0 0 9 10" fill="none" stroke="#6a6a6a" stroke-width=".9"><path d="M.5 2.500h8M3 2.500V1h3v1.500M1.500 2.500v7h6v-7M3.500 4.500v3.500M5.500 4.500v3.500"/></svg></div>
</div>
<div class="t" style="left:1679.200px;top:17px;width:.8px;height:928px;background:rgba(30,30,30,.6);z-index:9"></div>
</body></html>
